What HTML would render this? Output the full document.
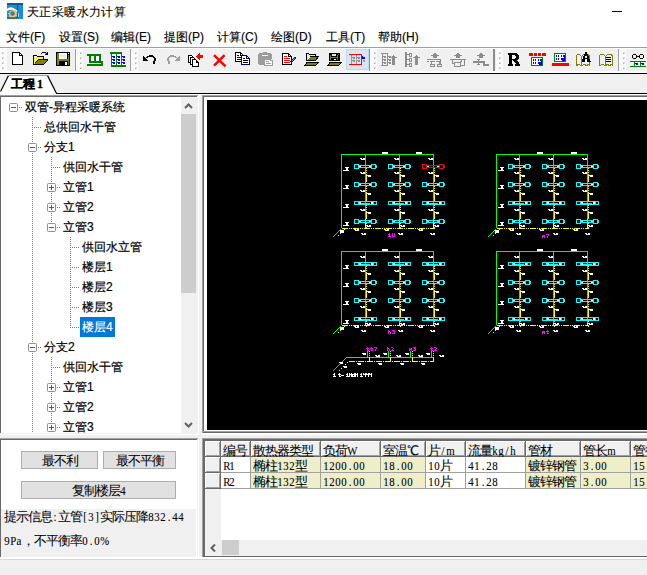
<!DOCTYPE html><html><head><meta charset="utf-8"><style>
*{margin:0;padding:0;box-sizing:border-box}
html,body{width:647px;height:575px;overflow:hidden;background:#f0f0f0;font-family:'Liberation Sans',sans-serif;font-size:12px;color:#000}
.a{position:absolute}
.t{position:absolute;white-space:nowrap;line-height:14px}
.m{font-family:'Liberation Serif',serif;font-size:12px;-webkit-text-stroke:0.1px #000}
.m i{font-style:normal;display:inline-block;width:6px;text-align:center;transform:scaleX(0.9)}
.c{font-size:13px;letter-spacing:-1px}
.ss{-webkit-text-stroke:0.05px #000}
svg{position:absolute;overflow:visible}
</style></head><body><div class="a" style="left:0;top:0;width:647px;height:47px;background:#fff"></div>
<svg class="a" style="left:7px;top:3px" width="16" height="16" viewBox="7 3 16 16">
<rect x="7" y="3" width="16" height="16" fill="#1b8fd6"/>
<rect x="7" y="3" width="16" height="2" fill="#0d5a97"/>
<rect x="17" y="4" width="1" height="14" fill="#0d4f86"/>
<path d="M7 9Q10 6 14 8.5L18 11L16 12L13 10Q10 9 7 11Z" fill="#fff"/>
<path d="M12.3 8.6l1.2 1.8 2-0.6 0.2 2.1 2 0.8-1.2 1.7 1 1.9-2.1 0.3-0.5 2-1.9-0.9-1.7 1.3-0.6-2-2.1-0.2 0.9-1.9-1.6-1.4 1.9-0.9-0.3-2.1 2 0.5z" fill="#f4c94a"/>
<circle cx="12.5" cy="13.5" r="2.2" fill="#4170c4"/>
<rect x="7" y="17" width="10" height="2" fill="#2f5fb8" opacity="0.8"/>
<rect x="18" y="13" width="1" height="4" fill="#e8f2ff" opacity="0.7"/>
</svg>
<div class="t" style="left:27px;top:5px;font-size:12px;letter-spacing:0.4px;-webkit-text-stroke:0.1px #000">天正采暖水力计算</div>
<div class="a" style="left:612px;top:11px;width:10px;height:1px;background:#000"></div>
<div class="t" style="left:6px;top:30px;-webkit-text-stroke:0.15px #000">文件(F)</div>
<div class="t" style="left:59px;top:30px;-webkit-text-stroke:0.15px #000">设置(S)</div>
<div class="t" style="left:111px;top:30px;-webkit-text-stroke:0.15px #000">编辑(E)</div>
<div class="t" style="left:164px;top:30px;-webkit-text-stroke:0.15px #000">提图(P)</div>
<div class="t" style="left:217px;top:30px;-webkit-text-stroke:0.15px #000">计算(C)</div>
<div class="t" style="left:271px;top:30px;-webkit-text-stroke:0.15px #000">绘图(D)</div>
<div class="t" style="left:326px;top:30px;-webkit-text-stroke:0.15px #000">工具(T)</div>
<div class="t" style="left:378px;top:30px;-webkit-text-stroke:0.15px #000">帮助(H)</div>
<div class="a" style="left:0;top:47px;width:647px;height:1px;background:#a0a0a0"></div>
<div class="a" style="left:0;top:48px;width:647px;height:1px;background:#fff"></div>
<div class="a" style="left:0;top:49px;width:647px;height:22px;background:#f0f0f0"></div>
<div class="a" style="left:0;top:71px;width:647px;height:2px;background:#fff"></div>
<div class="a" style="left:0;top:73px;width:647px;height:1px;background:#000"></div>
<div class="a" style="left:0px;top:49px;width:7px;height:22px;background:#fafafa"></div>
<div class="a" style="left:76px;top:49px;width:7px;height:22px;background:#fafafa"></div>
<div class="a" style="left:131px;top:49px;width:7px;height:22px;background:#fafafa"></div>
<div class="a" style="left:370px;top:49px;width:7px;height:22px;background:#fafafa"></div>
<div class="a" style="left:496px;top:49px;width:7px;height:22px;background:#fafafa"></div>
<div class="a" style="left:619px;top:49px;width:7px;height:22px;background:#fafafa"></div>
<div class="a" style="left:2px;top:52px;width:2px;height:2px;background:#dcdcdc"></div>
<div class="a" style="left:2px;top:53px;width:1px;height:1px;background:#a8a8a8"></div>
<div class="a" style="left:2px;top:57px;width:2px;height:2px;background:#dcdcdc"></div>
<div class="a" style="left:2px;top:58px;width:1px;height:1px;background:#a8a8a8"></div>
<div class="a" style="left:2px;top:62px;width:2px;height:2px;background:#dcdcdc"></div>
<div class="a" style="left:2px;top:63px;width:1px;height:1px;background:#a8a8a8"></div>
<div class="a" style="left:2px;top:67px;width:2px;height:2px;background:#dcdcdc"></div>
<div class="a" style="left:2px;top:68px;width:1px;height:1px;background:#a8a8a8"></div>
<div class="a" style="left:80px;top:52px;width:2px;height:2px;background:#dcdcdc"></div>
<div class="a" style="left:80px;top:53px;width:1px;height:1px;background:#a8a8a8"></div>
<div class="a" style="left:80px;top:57px;width:2px;height:2px;background:#dcdcdc"></div>
<div class="a" style="left:80px;top:58px;width:1px;height:1px;background:#a8a8a8"></div>
<div class="a" style="left:80px;top:62px;width:2px;height:2px;background:#dcdcdc"></div>
<div class="a" style="left:80px;top:63px;width:1px;height:1px;background:#a8a8a8"></div>
<div class="a" style="left:80px;top:67px;width:2px;height:2px;background:#dcdcdc"></div>
<div class="a" style="left:80px;top:68px;width:1px;height:1px;background:#a8a8a8"></div>
<div class="a" style="left:135px;top:52px;width:2px;height:2px;background:#dcdcdc"></div>
<div class="a" style="left:135px;top:53px;width:1px;height:1px;background:#a8a8a8"></div>
<div class="a" style="left:135px;top:57px;width:2px;height:2px;background:#dcdcdc"></div>
<div class="a" style="left:135px;top:58px;width:1px;height:1px;background:#a8a8a8"></div>
<div class="a" style="left:135px;top:62px;width:2px;height:2px;background:#dcdcdc"></div>
<div class="a" style="left:135px;top:63px;width:1px;height:1px;background:#a8a8a8"></div>
<div class="a" style="left:135px;top:67px;width:2px;height:2px;background:#dcdcdc"></div>
<div class="a" style="left:135px;top:68px;width:1px;height:1px;background:#a8a8a8"></div>
<div class="a" style="left:374px;top:52px;width:2px;height:2px;background:#dcdcdc"></div>
<div class="a" style="left:374px;top:53px;width:1px;height:1px;background:#a8a8a8"></div>
<div class="a" style="left:374px;top:57px;width:2px;height:2px;background:#dcdcdc"></div>
<div class="a" style="left:374px;top:58px;width:1px;height:1px;background:#a8a8a8"></div>
<div class="a" style="left:374px;top:62px;width:2px;height:2px;background:#dcdcdc"></div>
<div class="a" style="left:374px;top:63px;width:1px;height:1px;background:#a8a8a8"></div>
<div class="a" style="left:374px;top:67px;width:2px;height:2px;background:#dcdcdc"></div>
<div class="a" style="left:374px;top:68px;width:1px;height:1px;background:#a8a8a8"></div>
<div class="a" style="left:499px;top:52px;width:2px;height:2px;background:#dcdcdc"></div>
<div class="a" style="left:499px;top:53px;width:1px;height:1px;background:#a8a8a8"></div>
<div class="a" style="left:499px;top:57px;width:2px;height:2px;background:#dcdcdc"></div>
<div class="a" style="left:499px;top:58px;width:1px;height:1px;background:#a8a8a8"></div>
<div class="a" style="left:499px;top:62px;width:2px;height:2px;background:#dcdcdc"></div>
<div class="a" style="left:499px;top:63px;width:1px;height:1px;background:#a8a8a8"></div>
<div class="a" style="left:499px;top:67px;width:2px;height:2px;background:#dcdcdc"></div>
<div class="a" style="left:499px;top:68px;width:1px;height:1px;background:#a8a8a8"></div>
<div class="a" style="left:623px;top:52px;width:2px;height:2px;background:#dcdcdc"></div>
<div class="a" style="left:623px;top:53px;width:1px;height:1px;background:#a8a8a8"></div>
<div class="a" style="left:623px;top:57px;width:2px;height:2px;background:#dcdcdc"></div>
<div class="a" style="left:623px;top:58px;width:1px;height:1px;background:#a8a8a8"></div>
<div class="a" style="left:623px;top:62px;width:2px;height:2px;background:#dcdcdc"></div>
<div class="a" style="left:623px;top:63px;width:1px;height:1px;background:#a8a8a8"></div>
<div class="a" style="left:623px;top:67px;width:2px;height:2px;background:#dcdcdc"></div>
<div class="a" style="left:623px;top:68px;width:1px;height:1px;background:#a8a8a8"></div>
<div class="a" style="left:75px;top:49px;width:1px;height:22px;background:#a0a0a0"></div>
<div class="a" style="left:130px;top:49px;width:1px;height:22px;background:#a0a0a0"></div>
<div class="a" style="left:369px;top:49px;width:1px;height:22px;background:#909090"></div>
<div class="a" style="left:493px;top:49px;width:2px;height:22px;background:#8c8c8c"></div>
<div class="a" style="left:618px;top:49px;width:1px;height:22px;background:#a0a0a0"></div>
<div class="a" style="left:346px;top:49px;width:23px;height:21px;background:#d9e5f2;border:1px solid #bcdaf5"></div>
<svg class="a" style="left:0;top:46px" width="647" height="26" viewBox="0 46 647 26" shape-rendering="crispEdges"><path d="M12.5 52.5H19.5L22.5 55.5V64.5H12.5Z" fill="#fff" stroke="#000" stroke-width="1" /><rect x="19" y="53" width="1" height="3" fill="#000"/><rect x="19" y="55" width="3" height="1" fill="#000"/><rect x="33" y="55" width="1" height="10" fill="#000"/><rect x="34" y="55" width="3" height="1" fill="#000"/><rect x="37" y="56" width="7" height="1" fill="#000"/><rect x="43" y="56" width="1" height="3" fill="#000"/><rect x="33" y="64" width="11" height="1" fill="#000"/><rect x="34" y="57" width="1" height="1" fill="#ffff00"/><rect x="35" y="57" width="1" height="1" fill="#ffff00"/><rect x="36" y="57" width="1" height="1" fill="#ffff00"/><rect x="37" y="57" width="1" height="1" fill="#ffff00"/><rect x="38" y="57" width="1" height="1" fill="#ffff00"/><rect x="39" y="57" width="1" height="1" fill="#ffff00"/><rect x="40" y="57" width="1" height="1" fill="#ffff00"/><rect x="41" y="57" width="1" height="1" fill="#ffff00"/><rect x="42" y="57" width="1" height="1" fill="#ffff00"/><rect x="34" y="58" width="1" height="1" fill="#ffff00"/><rect x="35" y="58" width="1" height="1" fill="#fff"/><rect x="36" y="58" width="1" height="1" fill="#ffff00"/><rect x="37" y="58" width="1" height="1" fill="#fff"/><rect x="38" y="58" width="1" height="1" fill="#ffff00"/><rect x="39" y="58" width="1" height="1" fill="#fff"/><rect x="40" y="58" width="1" height="1" fill="#ffff00"/><rect x="41" y="58" width="1" height="1" fill="#fff"/><rect x="42" y="58" width="1" height="1" fill="#ffff00"/><rect x="34" y="59" width="1" height="1" fill="#ffff00"/><rect x="35" y="59" width="1" height="1" fill="#ffff00"/><rect x="36" y="59" width="1" height="1" fill="#ffff00"/><rect x="34" y="60" width="1" height="1" fill="#ffff00"/><rect x="35" y="60" width="1" height="1" fill="#fff"/><rect x="34" y="61" width="1" height="1" fill="#ffff00"/><rect x="35" y="61" width="1" height="1" fill="#ffff00"/><rect x="34" y="62" width="1" height="1" fill="#ffff00"/><rect x="34" y="63" width="1" height="1" fill="#ffff00"/><path d="M35 64L38.5 59.5H47.5L43.5 64Z" fill="#808000" stroke="none" stroke-width="1" /><rect x="38" y="59" width="10" height="1" fill="#000"/><rect x="47" y="59" width="1" height="2" fill="#000"/><path d="M34.5 63.5L38.5 59.5" fill="none" stroke="#000" stroke-width="1" /><path d="M43.5 64.5L47.5 60.5" fill="none" stroke="#000" stroke-width="1" /><rect x="42" y="52" width="4" height="1" fill="#000"/><rect x="41" y="53" width="1" height="1" fill="#000"/><rect x="46" y="53" width="1" height="1" fill="#000"/><path d="M44 55H48V51Z" fill="#000" stroke="none" stroke-width="1" /><rect x="56" y="52" width="14" height="14" fill="#000"/><rect x="57" y="53" width="2" height="12" fill="#808000"/><rect x="68" y="55" width="1" height="10" fill="#808000"/><rect x="57" y="59" width="12" height="2" fill="#808000"/><rect x="59" y="53" width="8" height="6" fill="#fff"/><rect x="60" y="54" width="6" height="4" fill="#ececec"/><rect x="65" y="62" width="2" height="3" fill="#fff"/><rect x="68" y="53" width="1" height="1" fill="#fff"/><rect x="87" y="54" width="14" height="2" fill="#008000"/><rect x="89" y="56" width="2" height="7" fill="#008000"/><rect x="91" y="56" width="3" height="5" fill="#fff"/><rect x="94" y="56" width="2" height="6" fill="#008000"/><rect x="96" y="56" width="3" height="5" fill="#fff"/><rect x="99" y="56" width="2" height="6" fill="#008000"/><rect x="89" y="61" width="14" height="2" fill="#008000"/><rect x="101" y="61" width="2" height="5" fill="#008000"/><rect x="87" y="63" width="14" height="1" fill="#fff"/><rect x="87" y="64" width="16" height="2" fill="#008000"/><rect x="110" y="52" width="12" height="2" fill="#008000"/><rect x="111" y="54" width="1" height="13" fill="#008000"/><rect x="116" y="54" width="1" height="11" fill="#008000"/><rect x="121" y="54" width="1" height="11" fill="#008000"/><rect x="111" y="65" width="15" height="2" fill="#008000"/><rect x="112" y="54" width="4" height="11" fill="#fff"/><rect x="117" y="54" width="4" height="11" fill="#fff"/><rect x="122" y="55" width="4" height="10" fill="#fbfbf0"/><rect x="112" y="56" width="3" height="1" fill="#0000ff"/><rect x="113" y="57" width="2" height="1" fill="#0000ff"/><rect x="112" y="59" width="3" height="1" fill="#0000ff"/><rect x="113" y="60" width="2" height="1" fill="#0000ff"/><rect x="112" y="62" width="3" height="1" fill="#0000ff"/><rect x="113" y="63" width="2" height="1" fill="#0000ff"/><rect x="117" y="56" width="3" height="1" fill="#0000ff"/><rect x="118" y="57" width="2" height="1" fill="#0000ff"/><rect x="117" y="59" width="3" height="1" fill="#0000ff"/><rect x="118" y="60" width="2" height="1" fill="#0000ff"/><rect x="117" y="62" width="3" height="1" fill="#0000ff"/><rect x="118" y="63" width="2" height="1" fill="#0000ff"/><rect x="122" y="56" width="3" height="1" fill="#0000ff"/><rect x="123" y="57" width="2" height="1" fill="#0000ff"/><rect x="122" y="59" width="3" height="1" fill="#0000ff"/><rect x="123" y="60" width="2" height="1" fill="#0000ff"/><rect x="122" y="62" width="3" height="1" fill="#0000ff"/><rect x="123" y="63" width="2" height="1" fill="#0000ff"/><rect x="143" y="56" width="1" height="5" fill="#000"/><rect x="144" y="57" width="1" height="4" fill="#000"/><rect x="145" y="58" width="1" height="3" fill="#000"/><rect x="146" y="59" width="1" height="2" fill="#000"/><rect x="147" y="60" width="1" height="1" fill="#000"/><rect x="146" y="57" width="2" height="1" fill="#000"/><rect x="147" y="56" width="2" height="1" fill="#000"/><rect x="149" y="55" width="4" height="1" fill="#000"/><rect x="148" y="56" width="6" height="1" fill="#000"/><rect x="153" y="57" width="2" height="1" fill="#000"/><rect x="154" y="58" width="2" height="3" fill="#000"/><rect x="153" y="61" width="2" height="1" fill="#000"/><rect x="153" y="62" width="2" height="2" fill="#000"/><rect x="179" y="56" width="1" height="5" fill="#9c9c9c"/><rect x="178" y="57" width="1" height="4" fill="#9c9c9c"/><rect x="177" y="58" width="1" height="3" fill="#9c9c9c"/><rect x="176" y="59" width="1" height="2" fill="#9c9c9c"/><rect x="175" y="60" width="1" height="1" fill="#9c9c9c"/><rect x="175" y="57" width="2" height="1" fill="#9c9c9c"/><rect x="174" y="56" width="2" height="1" fill="#9c9c9c"/><rect x="170" y="55" width="4" height="1" fill="#9c9c9c"/><rect x="169" y="56" width="6" height="1" fill="#9c9c9c"/><rect x="168" y="57" width="2" height="1" fill="#9c9c9c"/><rect x="167" y="58" width="2" height="3" fill="#9c9c9c"/><rect x="168" y="61" width="2" height="1" fill="#9c9c9c"/><rect x="168" y="62" width="2" height="2" fill="#9c9c9c"/><path d="M188.5 55.5H191.5L194.5 58.5V62.5H188.5Z" fill="#fff" stroke="#000" stroke-width="1" /><path d="M192 56.5V59H194.5Z" fill="#000" stroke="none" stroke-width="1" /><path d="M190.5 57.5H193.5L196.5 60.5V64.5H190.5Z" fill="#fff" stroke="#000" stroke-width="1" /><path d="M194 58.5V61H196.5Z" fill="#000" stroke="none" stroke-width="1" /><path d="M192.5 59.5H195.5L198.5 62.5V66.5H192.5Z" fill="#fff" stroke="#000" stroke-width="1" /><path d="M196 60.5V63H198.5Z" fill="#000" stroke="none" stroke-width="1" /><path d="M196 56.5L199.5 52.5V55H203V58H199.5V60.5Z" fill="#ff0000" stroke="none" stroke-width="1" /><path d="M214 55.2L225.6 66.4M224.6 55.2L214 65.6" fill="none" stroke="#ff0000" stroke-width="2.5" shape-rendering="auto"/><path d="M235.5 52.5H240.5L243.5 55.5V61.5H235.5Z" fill="#fff" stroke="#000" stroke-width="1" /><rect x="240" y="53" width="1" height="3" fill="#000"/><rect x="240" y="55" width="3" height="1" fill="#000"/><rect x="237" y="55" width="2" height="1" fill="#000"/><rect x="237" y="57" width="4" height="1" fill="#000"/><rect x="237" y="59" width="4" height="1" fill="#000"/><path d="M241.5 55.5H246.5L249.5 58.5V64.5H241.5Z" fill="#fff" stroke="#000080" stroke-width="1" /><rect x="246" y="56" width="1" height="3" fill="#000080"/><rect x="246" y="58" width="3" height="1" fill="#000080"/><rect x="243" y="58" width="2" height="1" fill="#000"/><rect x="243" y="60" width="5" height="1" fill="#000"/><rect x="243" y="62" width="5" height="1" fill="#000"/><rect x="259" y="53" width="12" height="12" fill="#9c9c9c"/><rect x="258" y="54" width="14" height="10" fill="#9c9c9c"/><rect x="263" y="52" width="4" height="1" fill="#9c9c9c"/><rect x="262" y="55" width="6" height="1" fill="#f4f4f4"/><rect x="264" y="59" width="9" height="7" fill="#9c9c9c"/><rect x="265" y="60" width="6" height="5" fill="#fafafa"/><rect x="271" y="61" width="1" height="4" fill="#fafafa"/><rect x="270" y="60" width="1" height="1" fill="#9c9c9c"/><rect x="271" y="59" width="2" height="1" fill="#f0f0f0"/><rect x="266" y="61" width="3" height="1" fill="#9c9c9c"/><rect x="266" y="63" width="5" height="1" fill="#9c9c9c"/><path d="M282.5 53.5H288.5L291.5 56.5V64.5H282.5Z" fill="#fff" stroke="#000" stroke-width="1" /><rect x="288" y="54" width="1" height="3" fill="#000"/><rect x="288" y="56" width="3" height="1" fill="#000"/><rect x="284" y="56" width="3" height="1" fill="#ff0000"/><rect x="284" y="58" width="6" height="1" fill="#ff0000"/><rect x="284" y="60" width="6" height="1" fill="#ff0000"/><rect x="284" y="62" width="6" height="1" fill="#ff0000"/><path d="M290.8 62.2L295.5 57.5" fill="none" stroke="#0000ff" stroke-width="2.6" /><path d="M292 61L295 58" fill="none" stroke="#b8c8ff" stroke-width="0.7" /><rect x="306" y="53" width="3" height="1" fill="#000"/><rect x="306" y="54" width="1" height="7" fill="#000"/><rect x="309" y="54" width="6" height="1" fill="#000"/><rect x="315" y="54" width="1" height="2" fill="#000"/><rect x="306" y="60" width="10" height="1" fill="#000"/><path d="M307 54.5H308.5L311 56.5L307 59.5Z" fill="#ffff00" stroke="none" stroke-width="1" /><rect x="310" y="55" width="4" height="1" fill="#ffff00"/><rect x="308" y="56" width="1" height="1" fill="#fff"/><path d="M308 59.5L310.5 56.5H318.5L315.5 59.5Z" fill="#808000" stroke="none" stroke-width="1" /><rect x="310" y="56" width="9" height="1" fill="#000"/><path d="M315.5 60.5L318.5 56.5" fill="none" stroke="#000" stroke-width="1" /><path d="M304.5 65.5L307.5 62H318.5L315.5 65.5Z" fill="#808000" stroke="#000" stroke-width="1" /><rect x="329" y="53" width="11" height="8" fill="#000"/><rect x="330" y="55" width="1" height="5" fill="#808000"/><rect x="337" y="55" width="1" height="5" fill="#808000"/><rect x="330" y="57" width="8" height="1" fill="#808000"/><rect x="332" y="54" width="4" height="2" fill="#e8e8e8"/><rect x="334" y="59" width="2" height="1" fill="#fff"/><rect x="338" y="54" width="1" height="1" fill="#808000"/><path d="M327.5 65.5L330.5 62H341.5L338.5 65.5Z" fill="#808000" stroke="#000" stroke-width="1" /><rect x="349" y="54" width="13" height="1" fill="#ff0000"/><rect x="349" y="64" width="13" height="1" fill="#ff0000"/><rect x="361" y="54" width="1" height="11" fill="#ff0000"/><rect x="351" y="55" width="1" height="9" fill="#9a9a9a"/><rect x="356" y="55" width="1" height="9" fill="#9a9a9a"/><rect x="352" y="57" width="3" height="1" fill="#8c8c8c"/><rect x="353" y="58" width="2" height="1" fill="#8c8c8c"/><rect x="352" y="60" width="3" height="1" fill="#8c8c8c"/><rect x="353" y="61" width="2" height="1" fill="#8c8c8c"/><rect x="357" y="57" width="3" height="1" fill="#8c8c8c"/><rect x="358" y="58" width="2" height="1" fill="#8c8c8c"/><rect x="357" y="60" width="3" height="1" fill="#8c8c8c"/><rect x="358" y="61" width="2" height="1" fill="#8c8c8c"/><rect x="362" y="57" width="3" height="2" fill="#0000ff"/><rect x="362" y="56" width="1" height="1" fill="#0000ff"/><rect x="363" y="60" width="2" height="2" fill="#9a9a9a"/><rect x="381" y="53" width="7" height="1" fill="#8c8c8c"/><rect x="381" y="65" width="7" height="1" fill="#8c8c8c"/><rect x="382" y="53" width="1" height="13" fill="#8c8c8c"/><rect x="387" y="53" width="1" height="13" fill="#8c8c8c"/><rect x="383" y="56" width="3" height="1" fill="#8c8c8c"/><rect x="384" y="57" width="2" height="1" fill="#8c8c8c"/><rect x="388" y="56" width="3" height="1" fill="#8c8c8c"/><rect x="389" y="57" width="2" height="1" fill="#8c8c8c"/><rect x="383" y="59" width="3" height="1" fill="#8c8c8c"/><rect x="384" y="60" width="2" height="1" fill="#8c8c8c"/><rect x="388" y="59" width="3" height="1" fill="#8c8c8c"/><rect x="389" y="60" width="2" height="1" fill="#8c8c8c"/><rect x="383" y="62" width="3" height="1" fill="#8c8c8c"/><rect x="384" y="63" width="2" height="1" fill="#8c8c8c"/><rect x="388" y="62" width="3" height="1" fill="#8c8c8c"/><rect x="389" y="63" width="2" height="1" fill="#8c8c8c"/><rect x="392" y="57" width="3" height="8" fill="#8c8c8c"/><rect x="390" y="57" width="7" height="1" fill="#8c8c8c"/><rect x="392" y="56" width="3" height="1" fill="#8c8c8c"/><rect x="393" y="55" width="1" height="1" fill="#8c8c8c"/><rect x="405" y="52" width="2" height="15" fill="#8c8c8c"/><rect x="407" y="54" width="2" height="1" fill="#8c8c8c"/><path d="M409.5 53.5 h2 v3 h-2z" fill="none" stroke="#8c8c8c" stroke-width="1" /><rect x="407" y="59" width="2" height="1" fill="#8c8c8c"/><path d="M409.5 58.5 h2 v3 h-2z" fill="none" stroke="#8c8c8c" stroke-width="1" /><rect x="407" y="64" width="2" height="1" fill="#8c8c8c"/><path d="M409.5 63.5 h2 v3 h-2z" fill="none" stroke="#8c8c8c" stroke-width="1" /><rect x="415" y="57" width="3" height="8" fill="#8c8c8c"/><rect x="413" y="57" width="7" height="1" fill="#8c8c8c"/><rect x="415" y="56" width="3" height="1" fill="#8c8c8c"/><rect x="416" y="55" width="1" height="1" fill="#8c8c8c"/><rect x="434" y="53" width="2" height="1" fill="#8c8c8c"/><rect x="433" y="54" width="4" height="1" fill="#8c8c8c"/><rect x="431" y="55" width="8" height="1" fill="#8c8c8c"/><rect x="433" y="56" width="4" height="2" fill="#8c8c8c"/><rect x="457" y="53" width="2" height="1" fill="#8c8c8c"/><rect x="456" y="54" width="4" height="1" fill="#8c8c8c"/><rect x="454" y="55" width="8" height="1" fill="#8c8c8c"/><rect x="456" y="56" width="4" height="2" fill="#8c8c8c"/><rect x="480" y="53" width="2" height="1" fill="#8c8c8c"/><rect x="479" y="54" width="4" height="1" fill="#8c8c8c"/><rect x="477" y="55" width="8" height="1" fill="#8c8c8c"/><rect x="479" y="56" width="4" height="2" fill="#8c8c8c"/><rect x="427" y="59" width="14" height="1" fill="#8c8c8c"/><rect x="427" y="61" width="2" height="1" fill="#8c8c8c"/><rect x="430" y="61" width="5" height="1" fill="#8c8c8c"/><rect x="436" y="61" width="4" height="1" fill="#8c8c8c"/><rect x="431" y="61" width="1" height="3" fill="#8c8c8c"/><rect x="440" y="59" width="1" height="5" fill="#8c8c8c"/><rect x="439" y="61" width="1" height="3" fill="#8c8c8c"/><path d="M430.5 64.5h4v2h-4z" fill="none" stroke="#8c8c8c" stroke-width="1" /><path d="M437.5 64.5h4v2h-4z" fill="none" stroke="#8c8c8c" stroke-width="1" /><rect x="450" y="59" width="16" height="1" fill="#8c8c8c"/><rect x="452" y="59" width="1" height="5" fill="#8c8c8c"/><rect x="464" y="59" width="1" height="7" fill="#8c8c8c"/><rect x="452" y="63" width="2" height="1" fill="#8c8c8c"/><path d="M454.5 62.5h6v4h-6z" fill="none" stroke="#8c8c8c" stroke-width="1" /><rect x="460" y="61" width="2" height="1" fill="#8c8c8c"/><rect x="461" y="60" width="1" height="1" fill="#8c8c8c"/><rect x="460" y="65" width="4" height="1" fill="#8c8c8c"/><rect x="477" y="59" width="3" height="1" fill="#8c8c8c"/><rect x="478" y="59" width="1" height="6" fill="#8c8c8c"/><rect x="477" y="64" width="3" height="1" fill="#8c8c8c"/><rect x="473" y="61" width="12" height="2" fill="#8c8c8c"/><rect x="483" y="62" width="2" height="4" fill="#8c8c8c"/><rect x="483" y="64" width="6" height="2" fill="#8c8c8c"/><rect x="508" y="53" width="9" height="1" fill="#000"/><rect x="508" y="54" width="10" height="1" fill="#000"/><rect x="509" y="55" width="3" height="1" fill="#000"/><rect x="515" y="55" width="4" height="1" fill="#000"/><rect x="509" y="56" width="3" height="1" fill="#000"/><rect x="516" y="56" width="3" height="1" fill="#000"/><rect x="509" y="57" width="3" height="1" fill="#000"/><rect x="516" y="57" width="3" height="1" fill="#000"/><rect x="509" y="58" width="3" height="1" fill="#000"/><rect x="515" y="58" width="4" height="1" fill="#000"/><rect x="509" y="59" width="9" height="1" fill="#000"/><rect x="509" y="60" width="3" height="1" fill="#000"/><rect x="513" y="60" width="4" height="1" fill="#000"/><rect x="509" y="61" width="3" height="1" fill="#000"/><rect x="514" y="61" width="4" height="1" fill="#000"/><rect x="509" y="62" width="3" height="1" fill="#000"/><rect x="515" y="62" width="4" height="1" fill="#000"/><rect x="509" y="63" width="3" height="1" fill="#000"/><rect x="516" y="63" width="3" height="1" fill="#000"/><rect x="508" y="64" width="5" height="1" fill="#000"/><rect x="515" y="64" width="5" height="1" fill="#000"/><rect x="508" y="65" width="5" height="1" fill="#000"/><rect x="515" y="65" width="5" height="1" fill="#000"/><rect x="529" y="53" width="4" height="3" fill="#ff0000"/><rect x="534" y="53" width="3" height="3" fill="#ff0000"/><rect x="538" y="53" width="3" height="3" fill="#ff0000"/><rect x="542" y="53" width="4" height="3" fill="#ff0000"/><path d="M531.5 57.5h11v8h-11z" fill="#fff" stroke="#008000" stroke-width="1.3" /><rect x="533" y="59" width="1" height="2" fill="#0000ff"/><rect x="533" y="62" width="1" height="2" fill="#0000ff"/><rect x="535" y="59" width="1" height="2" fill="#0000ff"/><rect x="535" y="62" width="1" height="2" fill="#0000ff"/><rect x="538" y="59" width="1" height="2" fill="#0000ff"/><rect x="538" y="62" width="1" height="2" fill="#0000ff"/><rect x="540" y="59" width="1" height="2" fill="#0000ff"/><rect x="540" y="62" width="1" height="2" fill="#0000ff"/><rect x="539" y="62" width="3" height="3" fill="#0000ff"/><rect x="541" y="59" width="1" height="3" fill="#0000ff"/><path d="M554.5 53.5h11v8h-11z" fill="#fff" stroke="#008000" stroke-width="1.3" /><rect x="556" y="55" width="1" height="2" fill="#0000ff"/><rect x="556" y="58" width="1" height="2" fill="#0000ff"/><rect x="558" y="55" width="1" height="2" fill="#0000ff"/><rect x="558" y="58" width="1" height="2" fill="#0000ff"/><rect x="561" y="55" width="1" height="2" fill="#0000ff"/><rect x="561" y="58" width="1" height="2" fill="#0000ff"/><rect x="563" y="55" width="1" height="2" fill="#0000ff"/><rect x="563" y="58" width="1" height="2" fill="#0000ff"/><rect x="562" y="58" width="3" height="3" fill="#0000ff"/><rect x="564" y="55" width="1" height="3" fill="#0000ff"/><rect x="552" y="63" width="17" height="3" fill="#ff0000"/><path d="M576.5 65.5V55.5L577.5 54.5H579.5L581.5 56.5L583.5 54.5H587.5L589.5 55.5V65.5L588.5 64.5L586.5 65.5L584.5 64.5L581.5 65.5L578.5 64.5Z" fill="none" stroke="#808000" stroke-width="1" /><path d="M581.5 56.5V64.5" fill="none" stroke="#808000" stroke-width="1" /><rect x="585" y="52" width="2" height="2" fill="#000"/><rect x="584" y="54" width="4" height="2" fill="#000"/><rect x="583" y="56" width="2" height="2" fill="#000"/><rect x="587" y="56" width="2" height="2" fill="#000"/><rect x="583" y="58" width="6" height="1" fill="#000"/><rect x="582" y="59" width="3" height="2" fill="#000"/><rect x="587" y="59" width="3" height="2" fill="#000"/><rect x="582" y="61" width="3" height="1" fill="#000"/><rect x="587" y="61" width="4" height="1" fill="#000"/><path d="M599.5 65.5V55.5L600.5 54.5H603.5L605.5 56.5L607.5 54.5H610.5L612.5 55.5V65.5L611.5 64.5L609.5 65.5L607.5 64.5L605.5 65.5L602.5 64.5Z" fill="none" stroke="#808000" stroke-width="1" /><path d="M605.5 56.5V64.5" fill="none" stroke="#808000" stroke-width="1" /><rect x="606" y="57" width="5" height="1" fill="#000"/><rect x="606" y="59" width="5" height="1" fill="#000"/><rect x="606" y="61" width="5" height="1" fill="#000"/><path d="M633.5 54.5h2l1 1v2l-1 1h-2l-1-1v-2z" fill="none" stroke="#000" stroke-width="1.2" /><path d="M640.5 54.5h2l1 1v2l-1 1h-2l-1-1v-2z" fill="none" stroke="#000" stroke-width="1.2" /><rect x="637" y="56" width="2" height="1" fill="#000"/><rect x="630" y="61" width="16" height="1" fill="#008000"/><rect x="630" y="66" width="16" height="1" fill="#008000"/><rect x="634" y="61" width="1" height="6" fill="#008000"/><rect x="640" y="61" width="1" height="6" fill="#008000"/><rect x="635" y="63" width="3" height="1" fill="#0000ff"/><rect x="636" y="64" width="2" height="1" fill="#0000ff"/><rect x="641" y="63" width="3" height="1" fill="#0000ff"/><rect x="642" y="64" width="2" height="1" fill="#0000ff"/></svg>
<div class="a" style="left:0;top:93px;width:647px;height:1px;background:#000"></div>
<div class="a" style="left:0;top:94px;width:647px;height:1px;background:#fff"></div>
<svg style="left:0;top:74px" width="70" height="21" viewBox="0 74 70 21">
<path d="M0,93 L0,91 L8,75 L47,75 L56,93 Z" fill="#fff"/>
<path d="M0.5,91.5 L8.5,75.5" stroke="#000" stroke-width="1.2" fill="none"/>
<path d="M8,75.5 L47,75.5" stroke="#a0a0a0" stroke-width="1" fill="none"/>
<path d="M47.5,75.5 L56.5,93.5" stroke="#000" stroke-width="1.2" fill="none"/>
<rect x="0" y="93" width="56" height="1" fill="#fff"/>
</svg>
<div class="t" style="left:11px;top:77px;font-weight:bold;font-size:12px;-webkit-text-stroke:0.3px #000">工程<span style="font-family:Liberation Serif;font-size:12px;margin-left:2px">1</span></div>
<div class="a" style="left:0px;top:95px;width:199px;height:340px;background:#fff"></div>
<div class="a" style="left:0px;top:95px;width:198px;height:1px;background:#a0a0a0"></div>
<div class="a" style="left:0px;top:96px;width:197px;height:1px;background:#696969"></div>
<div class="a" style="left:0px;top:96px;width:1px;height:338px;background:#696969"></div>
<div class="a" style="left:197px;top:96px;width:1px;height:338px;background:#f0f0f0"></div>
<div class="a" style="left:0px;top:433px;width:198px;height:1px;background:#f0f0f0"></div>
<div class="a" style="left:1px;top:97px;width:180px;height:336px;overflow:hidden"><div class="a" style="left:-1px;top:-97px;width:198px;height:434px"><svg class="a" style="left:0;top:0" width="198" height="434" viewBox="0 0 198 434" shape-rendering="crispEdges"><path fill="#7a7a7a" d="M32 117h1v1h-1zM32 119h1v1h-1zM32 121h1v1h-1zM32 123h1v1h-1zM32 125h1v1h-1zM32 127h1v1h-1zM32 129h1v1h-1zM32 131h1v1h-1zM32 133h1v1h-1zM32 135h1v1h-1zM32 137h1v1h-1zM32 139h1v1h-1zM32 141h1v1h-1zM32 153h1v1h-1zM32 155h1v1h-1zM32 157h1v1h-1zM32 159h1v1h-1zM32 161h1v1h-1zM32 163h1v1h-1zM32 165h1v1h-1zM32 167h1v1h-1zM32 169h1v1h-1zM32 171h1v1h-1zM32 173h1v1h-1zM32 175h1v1h-1zM32 177h1v1h-1zM32 179h1v1h-1zM32 181h1v1h-1zM32 183h1v1h-1zM32 185h1v1h-1zM32 187h1v1h-1zM32 189h1v1h-1zM32 191h1v1h-1zM32 193h1v1h-1zM32 195h1v1h-1zM32 197h1v1h-1zM32 199h1v1h-1zM32 201h1v1h-1zM32 203h1v1h-1zM32 205h1v1h-1zM32 207h1v1h-1zM32 209h1v1h-1zM32 211h1v1h-1zM32 213h1v1h-1zM32 215h1v1h-1zM32 217h1v1h-1zM32 219h1v1h-1zM32 221h1v1h-1zM32 223h1v1h-1zM32 225h1v1h-1zM32 227h1v1h-1zM32 229h1v1h-1zM32 231h1v1h-1zM32 233h1v1h-1zM32 235h1v1h-1zM32 237h1v1h-1zM32 239h1v1h-1zM32 241h1v1h-1zM32 243h1v1h-1zM32 245h1v1h-1zM32 247h1v1h-1zM32 249h1v1h-1zM32 251h1v1h-1zM32 253h1v1h-1zM32 255h1v1h-1zM32 257h1v1h-1zM32 259h1v1h-1zM32 261h1v1h-1zM32 263h1v1h-1zM32 265h1v1h-1zM32 267h1v1h-1zM32 269h1v1h-1zM32 271h1v1h-1zM32 273h1v1h-1zM32 275h1v1h-1zM32 277h1v1h-1zM32 279h1v1h-1zM32 281h1v1h-1zM32 283h1v1h-1zM32 285h1v1h-1zM32 287h1v1h-1zM32 289h1v1h-1zM32 291h1v1h-1zM32 293h1v1h-1zM32 295h1v1h-1zM32 297h1v1h-1zM32 299h1v1h-1zM32 301h1v1h-1zM32 303h1v1h-1zM32 305h1v1h-1zM32 307h1v1h-1zM32 309h1v1h-1zM32 311h1v1h-1zM32 313h1v1h-1zM32 315h1v1h-1zM32 317h1v1h-1zM32 319h1v1h-1zM32 321h1v1h-1zM32 323h1v1h-1zM32 325h1v1h-1zM32 327h1v1h-1zM32 329h1v1h-1zM32 331h1v1h-1zM32 333h1v1h-1zM32 335h1v1h-1zM32 337h1v1h-1zM32 339h1v1h-1zM32 341h1v1h-1zM32 353h1v1h-1zM32 355h1v1h-1zM32 357h1v1h-1zM32 359h1v1h-1zM32 361h1v1h-1zM32 363h1v1h-1zM32 365h1v1h-1zM32 367h1v1h-1zM32 369h1v1h-1zM32 371h1v1h-1zM32 373h1v1h-1zM32 375h1v1h-1zM32 377h1v1h-1zM32 379h1v1h-1zM32 381h1v1h-1zM32 383h1v1h-1zM32 385h1v1h-1zM32 387h1v1h-1zM32 389h1v1h-1zM32 391h1v1h-1zM32 393h1v1h-1zM32 395h1v1h-1zM32 397h1v1h-1zM32 399h1v1h-1zM32 401h1v1h-1zM32 403h1v1h-1zM32 405h1v1h-1zM32 407h1v1h-1zM32 409h1v1h-1zM32 411h1v1h-1zM32 413h1v1h-1zM32 415h1v1h-1zM32 417h1v1h-1zM32 419h1v1h-1zM32 421h1v1h-1zM32 423h1v1h-1zM32 425h1v1h-1zM32 427h1v1h-1zM32 429h1v1h-1zM32 431h1v1h-1zM51 157h1v1h-1zM51 159h1v1h-1zM51 161h1v1h-1zM51 163h1v1h-1zM51 165h1v1h-1zM51 167h1v1h-1zM51 169h1v1h-1zM51 171h1v1h-1zM51 173h1v1h-1zM51 175h1v1h-1zM51 177h1v1h-1zM51 179h1v1h-1zM51 181h1v1h-1zM51 193h1v1h-1zM51 195h1v1h-1zM51 197h1v1h-1zM51 199h1v1h-1zM51 201h1v1h-1zM51 213h1v1h-1zM51 215h1v1h-1zM51 217h1v1h-1zM51 219h1v1h-1zM51 221h1v1h-1zM70 237h1v1h-1zM70 239h1v1h-1zM70 241h1v1h-1zM70 243h1v1h-1zM70 245h1v1h-1zM70 247h1v1h-1zM70 249h1v1h-1zM70 251h1v1h-1zM70 253h1v1h-1zM70 255h1v1h-1zM70 257h1v1h-1zM70 259h1v1h-1zM70 261h1v1h-1zM70 263h1v1h-1zM70 265h1v1h-1zM70 267h1v1h-1zM70 269h1v1h-1zM70 271h1v1h-1zM70 273h1v1h-1zM70 275h1v1h-1zM70 277h1v1h-1zM70 279h1v1h-1zM70 281h1v1h-1zM70 283h1v1h-1zM70 285h1v1h-1zM70 287h1v1h-1zM70 289h1v1h-1zM70 291h1v1h-1zM70 293h1v1h-1zM70 295h1v1h-1zM70 297h1v1h-1zM70 299h1v1h-1zM70 301h1v1h-1zM70 303h1v1h-1zM70 305h1v1h-1zM70 307h1v1h-1zM70 309h1v1h-1zM70 311h1v1h-1zM70 313h1v1h-1zM70 315h1v1h-1zM70 317h1v1h-1zM70 319h1v1h-1zM70 321h1v1h-1zM70 323h1v1h-1zM70 325h1v1h-1zM70 327h1v1h-1zM51 357h1v1h-1zM51 359h1v1h-1zM51 361h1v1h-1zM51 363h1v1h-1zM51 365h1v1h-1zM51 367h1v1h-1zM51 369h1v1h-1zM51 371h1v1h-1zM51 373h1v1h-1zM51 375h1v1h-1zM51 377h1v1h-1zM51 379h1v1h-1zM51 381h1v1h-1zM51 393h1v1h-1zM51 395h1v1h-1zM51 397h1v1h-1zM51 399h1v1h-1zM51 401h1v1h-1zM51 413h1v1h-1zM51 415h1v1h-1zM51 417h1v1h-1zM51 419h1v1h-1zM51 421h1v1h-1zM19 107h1v1h-1zM21 107h1v1h-1zM34 127h1v1h-1zM36 127h1v1h-1zM38 127h1v1h-1zM40 127h1v1h-1zM38 147h1v1h-1zM40 147h1v1h-1zM53 167h1v1h-1zM55 167h1v1h-1zM57 167h1v1h-1zM59 167h1v1h-1zM57 187h1v1h-1zM59 187h1v1h-1zM57 207h1v1h-1zM59 207h1v1h-1zM57 227h1v1h-1zM59 227h1v1h-1zM72 247h1v1h-1zM74 247h1v1h-1zM76 247h1v1h-1zM78 247h1v1h-1zM72 267h1v1h-1zM74 267h1v1h-1zM76 267h1v1h-1zM78 267h1v1h-1zM72 287h1v1h-1zM74 287h1v1h-1zM76 287h1v1h-1zM78 287h1v1h-1zM72 307h1v1h-1zM74 307h1v1h-1zM76 307h1v1h-1zM78 307h1v1h-1zM72 327h1v1h-1zM74 327h1v1h-1zM76 327h1v1h-1zM78 327h1v1h-1zM38 347h1v1h-1zM40 347h1v1h-1zM53 367h1v1h-1zM55 367h1v1h-1zM57 367h1v1h-1zM59 367h1v1h-1zM57 387h1v1h-1zM59 387h1v1h-1zM57 407h1v1h-1zM59 407h1v1h-1zM57 427h1v1h-1zM59 427h1v1h-1z"/><rect x="9.5" y="103.5" width="8" height="8" rx="1" fill="#fff" stroke="#8f8f8f" stroke-width="1" shape-rendering="auto"/><rect x="11" y="107" width="5" height="1" fill="#3c5a9a"/><rect x="28.5" y="143.5" width="8" height="8" rx="1" fill="#fff" stroke="#8f8f8f" stroke-width="1" shape-rendering="auto"/><rect x="30" y="147" width="5" height="1" fill="#3c5a9a"/><rect x="47.5" y="183.5" width="8" height="8" rx="1" fill="#fff" stroke="#8f8f8f" stroke-width="1" shape-rendering="auto"/><rect x="49" y="187" width="5" height="1" fill="#3c5a9a"/><rect x="51" y="185" width="1" height="5" fill="#3c5a9a"/><rect x="47.5" y="203.5" width="8" height="8" rx="1" fill="#fff" stroke="#8f8f8f" stroke-width="1" shape-rendering="auto"/><rect x="49" y="207" width="5" height="1" fill="#3c5a9a"/><rect x="51" y="205" width="1" height="5" fill="#3c5a9a"/><rect x="47.5" y="223.5" width="8" height="8" rx="1" fill="#fff" stroke="#8f8f8f" stroke-width="1" shape-rendering="auto"/><rect x="49" y="227" width="5" height="1" fill="#3c5a9a"/><rect x="28.5" y="343.5" width="8" height="8" rx="1" fill="#fff" stroke="#8f8f8f" stroke-width="1" shape-rendering="auto"/><rect x="30" y="347" width="5" height="1" fill="#3c5a9a"/><rect x="47.5" y="383.5" width="8" height="8" rx="1" fill="#fff" stroke="#8f8f8f" stroke-width="1" shape-rendering="auto"/><rect x="49" y="387" width="5" height="1" fill="#3c5a9a"/><rect x="51" y="385" width="1" height="5" fill="#3c5a9a"/><rect x="47.5" y="403.5" width="8" height="8" rx="1" fill="#fff" stroke="#8f8f8f" stroke-width="1" shape-rendering="auto"/><rect x="49" y="407" width="5" height="1" fill="#3c5a9a"/><rect x="51" y="405" width="1" height="5" fill="#3c5a9a"/><rect x="47.5" y="423.5" width="8" height="8" rx="1" fill="#fff" stroke="#8f8f8f" stroke-width="1" shape-rendering="auto"/><rect x="49" y="427" width="5" height="1" fill="#3c5a9a"/><rect x="51" y="425" width="1" height="5" fill="#3c5a9a"/></svg>
<div class="t" style="left:25px;top:100px;-webkit-text-stroke:0.2px #000">双管-异程采暖系统</div>
<div class="t" style="left:44px;top:120px;-webkit-text-stroke:0.2px #000">总供回水干管</div>
<div class="t" style="left:44px;top:140px;-webkit-text-stroke:0.2px #000">分支1</div>
<div class="t" style="left:63px;top:160px;-webkit-text-stroke:0.2px #000">供回水干管</div>
<div class="t" style="left:63px;top:180px;-webkit-text-stroke:0.2px #000">立管1</div>
<div class="t" style="left:63px;top:200px;-webkit-text-stroke:0.2px #000">立管2</div>
<div class="t" style="left:63px;top:220px;-webkit-text-stroke:0.2px #000">立管3</div>
<div class="t" style="left:82px;top:240px;-webkit-text-stroke:0.2px #000">供回水立管</div>
<div class="t" style="left:82px;top:260px;-webkit-text-stroke:0.2px #000">楼层1</div>
<div class="t" style="left:82px;top:280px;-webkit-text-stroke:0.2px #000">楼层2</div>
<div class="t" style="left:82px;top:300px;-webkit-text-stroke:0.2px #000">楼层3</div>
<div class="a" style="left:80px;top:317px;width:35px;height:20px;background:#0078d7"></div>
<div class="t" style="left:82px;top:320px;color:#fff;-webkit-text-stroke:0.15px #fff">楼层4</div>
<div class="t" style="left:44px;top:340px;-webkit-text-stroke:0.2px #000">分支2</div>
<div class="t" style="left:63px;top:360px;-webkit-text-stroke:0.2px #000">供回水干管</div>
<div class="t" style="left:63px;top:380px;-webkit-text-stroke:0.2px #000">立管1</div>
<div class="t" style="left:63px;top:400px;-webkit-text-stroke:0.2px #000">立管2</div>
<div class="t" style="left:63px;top:420px;-webkit-text-stroke:0.2px #000">立管3</div></div></div>
<div class="a" style="left:181px;top:97px;width:16px;height:336px;background:#f0f0f0"></div>
<div class="a" style="left:181px;top:114px;width:15px;height:179px;background:#cdcdcd"></div>
<svg class="a" style="left:181px;top:97px" width="16" height="336" viewBox="181 97 16 336"><path d="M185 108L188.5 104.5L192 108M185 423L188.5 426.5L192 423" fill="none" stroke="#606060" stroke-width="2"/></svg>
<div class="a" style="left:202px;top:95px;width:445px;height:340px;background:#fff"></div>
<div class="a" style="left:202px;top:95px;width:445px;height:1px;background:#a0a0a0"></div>
<div class="a" style="left:203px;top:96px;width:444px;height:1px;background:#696969"></div>
<div class="a" style="left:202px;top:95px;width:1px;height:338px;background:#a0a0a0"></div>
<div class="a" style="left:203px;top:96px;width:1px;height:337px;background:#696969"></div>
<div class="a" style="left:202px;top:431px;width:445px;height:1px;background:#a0a0a0"></div>
<div class="a" style="left:203px;top:432px;width:444px;height:1px;background:#696969"></div>
<div class="a" style="left:207px;top:100px;width:440px;height:330px;background:#000"></div>
<div class="a" style="left:0px;top:438px;width:199px;height:120px;background:#fff"></div>
<div class="a" style="left:0px;top:438px;width:198px;height:1px;background:#a0a0a0"></div>
<div class="a" style="left:0px;top:439px;width:197px;height:1px;background:#696969"></div>
<div class="a" style="left:0px;top:439px;width:1px;height:118px;background:#696969"></div>
<div class="a" style="left:197px;top:439px;width:1px;height:118px;background:#f0f0f0"></div>
<div class="a" style="left:198px;top:439px;width:1px;height:118px;background:#fff"></div>
<div class="a" style="left:1px;top:509px;width:195px;height:48px;background:#f0f0f0"></div>
<div class="a" style="left:202px;top:438px;width:445px;height:120px;background:#fff"></div>
<div class="a" style="left:202px;top:438px;width:445px;height:1px;background:#a0a0a0"></div>
<div class="a" style="left:203px;top:439px;width:444px;height:1px;background:#696969"></div>
<div class="a" style="left:202px;top:438px;width:1px;height:119px;background:#a0a0a0"></div>
<div class="a" style="left:203px;top:439px;width:1px;height:118px;background:#696969"></div>
<div class="a" style="left:203px;top:556px;width:444px;height:1px;background:#696969"></div>
<div class="a" style="left:0px;top:557px;width:647px;height:2px;background:#fff"></div>
<div class="a" style="left:0px;top:559px;width:647px;height:1px;background:#d8d8d8"></div>
<svg class="a" style="left:207px;top:100px" width="440" height="330" viewBox="207 100 440 330" shape-rendering="crispEdges"><path fill="#00ff00" d="M341 154h93v1h-93zM341 154h1v74h-1zM340 229h1v1h-1zM339 230h1v1h-1zM338 231h1v1h-1zM337 232h1v1h-1zM336 233h1v1h-1zM335 234h1v1h-1zM334 235h1v1h-1zM333 236h1v1h-1zM365 154h1v65h-1zM399 154h1v65h-1zM433 154h1v65h-1zM496 154h92v1h-92zM496 154h1v74h-1zM495 229h1v1h-1zM494 230h1v1h-1zM493 231h1v1h-1zM492 232h1v1h-1zM491 233h1v1h-1zM490 234h1v1h-1zM489 235h1v1h-1zM488 236h1v1h-1zM519 154h1v65h-1zM553 154h1v65h-1zM587 154h1v65h-1zM341 251h93v1h-93zM341 251h1v74h-1zM340 326h1v1h-1zM339 327h1v1h-1zM338 328h1v1h-1zM337 329h1v1h-1zM336 330h1v1h-1zM335 331h1v1h-1zM334 332h1v1h-1zM333 333h1v1h-1zM365 251h1v72h-1zM399 251h1v72h-1zM433 251h1v72h-1zM496 251h92v1h-92zM496 251h1v74h-1zM495 326h1v1h-1zM494 327h1v1h-1zM493 328h1v1h-1zM492 329h1v1h-1zM491 330h1v1h-1zM490 331h1v1h-1zM489 332h1v1h-1zM488 333h1v1h-1zM519 251h1v72h-1zM553 251h1v72h-1zM587 251h1v72h-1zM346 357h87v1h-87zM345 358h1v1h-1zM344 359h1v1h-1zM343 360h1v1h-1zM342 361h1v1h-1zM341 362h1v1h-1zM340 363h1v1h-1zM339 364h1v1h-1zM338 365h1v1h-1zM337 366h1v1h-1zM336 367h1v1h-1zM335 368h1v1h-1zM334 369h1v1h-1zM333 370h1v1h-1zM367 351h1v6h-1zM388 351h1v6h-1zM410 351h1v6h-1zM431 351h1v6h-1z"/><path fill="#ffff00" d="M344 229h1v1h-1zM342 231h1v1h-1zM340 233h1v1h-1zM338 235h1v1h-1zM342 228h1v1h-1zM343 228h1v1h-1zM344 228h1v1h-1zM345 228h1v1h-1zM346 228h1v1h-1zM347 228h1v1h-1zM349 228h1v1h-1zM351 228h1v1h-1zM353 228h1v1h-1zM354 228h1v1h-1zM355 228h1v1h-1zM356 228h1v1h-1zM357 228h1v1h-1zM358 228h1v1h-1zM360 228h1v1h-1zM362 228h1v1h-1zM364 228h1v1h-1zM365 228h1v1h-1zM366 228h1v1h-1zM367 228h1v1h-1zM368 228h1v1h-1zM369 228h1v1h-1zM371 228h1v1h-1zM373 228h1v1h-1zM375 228h1v1h-1zM376 228h1v1h-1zM377 228h1v1h-1zM378 228h1v1h-1zM379 228h1v1h-1zM380 228h1v1h-1zM382 228h1v1h-1zM384 228h1v1h-1zM386 228h1v1h-1zM387 228h1v1h-1zM388 228h1v1h-1zM389 228h1v1h-1zM390 228h1v1h-1zM391 228h1v1h-1zM393 228h1v1h-1zM395 228h1v1h-1zM397 228h1v1h-1zM398 228h1v1h-1zM399 228h1v1h-1zM400 228h1v1h-1zM401 228h1v1h-1zM402 228h1v1h-1zM404 228h1v1h-1zM406 228h1v1h-1zM408 228h1v1h-1zM409 228h1v1h-1zM410 228h1v1h-1zM411 228h1v1h-1zM412 228h1v1h-1zM413 228h1v1h-1zM415 228h1v1h-1zM417 228h1v1h-1zM419 228h1v1h-1zM420 228h1v1h-1zM421 228h1v1h-1zM422 228h1v1h-1zM423 228h1v1h-1zM424 228h1v1h-1zM426 228h1v1h-1zM428 228h1v1h-1zM430 228h1v1h-1zM431 228h1v1h-1zM432 228h1v1h-1zM433 228h1v1h-1zM434 228h1v1h-1zM365 219h1v9h-1zM366 168h1v1h-1zM366 170h1v1h-1zM366 172h1v1h-1zM366 174h1v8h-1zM366 186h1v1h-1zM366 188h1v1h-1zM366 190h1v1h-1zM366 192h1v9h-1zM366 205h1v1h-1zM366 207h1v1h-1zM366 209h1v1h-1zM366 211h1v8h-1zM366 223h1v1h-1zM366 225h1v1h-1zM366 227h1v1h-1zM366 229h1v0h-1zM399 219h1v9h-1zM400 168h1v1h-1zM400 170h1v1h-1zM400 172h1v1h-1zM400 174h1v8h-1zM400 186h1v1h-1zM400 188h1v1h-1zM400 190h1v1h-1zM400 192h1v9h-1zM400 205h1v1h-1zM400 207h1v1h-1zM400 209h1v1h-1zM400 211h1v8h-1zM400 223h1v1h-1zM400 225h1v1h-1zM400 227h1v1h-1zM400 229h1v0h-1zM433 219h1v9h-1zM434 168h1v1h-1zM434 170h1v1h-1zM434 172h1v1h-1zM434 174h1v8h-1zM434 186h1v1h-1zM434 188h1v1h-1zM434 190h1v1h-1zM434 192h1v9h-1zM434 205h1v1h-1zM434 207h1v1h-1zM434 209h1v1h-1zM434 211h1v8h-1zM434 223h1v1h-1zM434 225h1v1h-1zM434 227h1v1h-1zM434 229h1v0h-1zM499 229h1v1h-1zM497 231h1v1h-1zM495 233h1v1h-1zM493 235h1v1h-1zM497 228h1v1h-1zM498 228h1v1h-1zM499 228h1v1h-1zM500 228h1v1h-1zM501 228h1v1h-1zM502 228h1v1h-1zM504 228h1v1h-1zM506 228h1v1h-1zM508 228h1v1h-1zM509 228h1v1h-1zM510 228h1v1h-1zM511 228h1v1h-1zM512 228h1v1h-1zM513 228h1v1h-1zM515 228h1v1h-1zM517 228h1v1h-1zM519 228h1v1h-1zM520 228h1v1h-1zM521 228h1v1h-1zM522 228h1v1h-1zM523 228h1v1h-1zM524 228h1v1h-1zM526 228h1v1h-1zM528 228h1v1h-1zM530 228h1v1h-1zM531 228h1v1h-1zM532 228h1v1h-1zM533 228h1v1h-1zM534 228h1v1h-1zM535 228h1v1h-1zM537 228h1v1h-1zM539 228h1v1h-1zM541 228h1v1h-1zM542 228h1v1h-1zM543 228h1v1h-1zM544 228h1v1h-1zM545 228h1v1h-1zM546 228h1v1h-1zM548 228h1v1h-1zM550 228h1v1h-1zM552 228h1v1h-1zM553 228h1v1h-1zM554 228h1v1h-1zM555 228h1v1h-1zM556 228h1v1h-1zM557 228h1v1h-1zM559 228h1v1h-1zM561 228h1v1h-1zM563 228h1v1h-1zM564 228h1v1h-1zM565 228h1v1h-1zM566 228h1v1h-1zM567 228h1v1h-1zM568 228h1v1h-1zM570 228h1v1h-1zM572 228h1v1h-1zM574 228h1v1h-1zM575 228h1v1h-1zM576 228h1v1h-1zM577 228h1v1h-1zM578 228h1v1h-1zM579 228h1v1h-1zM581 228h1v1h-1zM583 228h1v1h-1zM585 228h1v1h-1zM586 228h1v1h-1zM587 228h1v1h-1zM588 228h1v1h-1zM519 219h1v9h-1zM520 168h1v1h-1zM520 170h1v1h-1zM520 172h1v1h-1zM520 174h1v8h-1zM520 186h1v1h-1zM520 188h1v1h-1zM520 190h1v1h-1zM520 192h1v9h-1zM520 205h1v1h-1zM520 207h1v1h-1zM520 209h1v1h-1zM520 211h1v8h-1zM520 223h1v1h-1zM520 225h1v1h-1zM520 227h1v1h-1zM520 229h1v0h-1zM553 219h1v9h-1zM554 168h1v1h-1zM554 170h1v1h-1zM554 172h1v1h-1zM554 174h1v8h-1zM554 186h1v1h-1zM554 188h1v1h-1zM554 190h1v1h-1zM554 192h1v9h-1zM554 205h1v1h-1zM554 207h1v1h-1zM554 209h1v1h-1zM554 211h1v8h-1zM554 223h1v1h-1zM554 225h1v1h-1zM554 227h1v1h-1zM554 229h1v0h-1zM587 219h1v9h-1zM588 168h1v1h-1zM588 170h1v1h-1zM588 172h1v1h-1zM588 174h1v8h-1zM588 186h1v1h-1zM588 188h1v1h-1zM588 190h1v1h-1zM588 192h1v9h-1zM588 205h1v1h-1zM588 207h1v1h-1zM588 209h1v1h-1zM588 211h1v8h-1zM588 223h1v1h-1zM588 225h1v1h-1zM588 227h1v1h-1zM588 229h1v0h-1zM344 326h1v1h-1zM342 328h1v1h-1zM340 330h1v1h-1zM338 332h1v1h-1zM342 325h1v1h-1zM343 325h1v1h-1zM344 325h1v1h-1zM345 325h1v1h-1zM346 325h1v1h-1zM347 325h1v1h-1zM349 325h1v1h-1zM351 325h1v1h-1zM353 325h1v1h-1zM354 325h1v1h-1zM355 325h1v1h-1zM356 325h1v1h-1zM357 325h1v1h-1zM358 325h1v1h-1zM360 325h1v1h-1zM362 325h1v1h-1zM364 325h1v1h-1zM365 325h1v1h-1zM366 325h1v1h-1zM367 325h1v1h-1zM368 325h1v1h-1zM369 325h1v1h-1zM371 325h1v1h-1zM373 325h1v1h-1zM375 325h1v1h-1zM376 325h1v1h-1zM377 325h1v1h-1zM378 325h1v1h-1zM379 325h1v1h-1zM380 325h1v1h-1zM382 325h1v1h-1zM384 325h1v1h-1zM386 325h1v1h-1zM387 325h1v1h-1zM388 325h1v1h-1zM389 325h1v1h-1zM390 325h1v1h-1zM391 325h1v1h-1zM393 325h1v1h-1zM395 325h1v1h-1zM397 325h1v1h-1zM398 325h1v1h-1zM399 325h1v1h-1zM400 325h1v1h-1zM401 325h1v1h-1zM402 325h1v1h-1zM404 325h1v1h-1zM406 325h1v1h-1zM408 325h1v1h-1zM409 325h1v1h-1zM410 325h1v1h-1zM411 325h1v1h-1zM412 325h1v1h-1zM413 325h1v1h-1zM415 325h1v1h-1zM417 325h1v1h-1zM419 325h1v1h-1zM420 325h1v1h-1zM421 325h1v1h-1zM422 325h1v1h-1zM423 325h1v1h-1zM424 325h1v1h-1zM426 325h1v1h-1zM428 325h1v1h-1zM430 325h1v1h-1zM431 325h1v1h-1zM432 325h1v1h-1zM433 325h1v1h-1zM434 325h1v1h-1zM365 323h1v2h-1zM366 266h1v1h-1zM366 268h1v1h-1zM366 270h1v1h-1zM366 272h1v8h-1zM366 284h1v1h-1zM366 286h1v1h-1zM366 288h1v1h-1zM366 290h1v8h-1zM366 302h1v1h-1zM366 304h1v1h-1zM366 306h1v1h-1zM366 308h1v9h-1zM366 321h1v1h-1zM366 323h1v1h-1zM366 325h1v1h-1zM366 327h1v-1h-1zM399 323h1v2h-1zM400 266h1v1h-1zM400 268h1v1h-1zM400 270h1v1h-1zM400 272h1v8h-1zM400 284h1v1h-1zM400 286h1v1h-1zM400 288h1v1h-1zM400 290h1v8h-1zM400 302h1v1h-1zM400 304h1v1h-1zM400 306h1v1h-1zM400 308h1v9h-1zM400 321h1v1h-1zM400 323h1v1h-1zM400 325h1v1h-1zM400 327h1v-1h-1zM433 323h1v2h-1zM434 266h1v1h-1zM434 268h1v1h-1zM434 270h1v1h-1zM434 272h1v8h-1zM434 284h1v1h-1zM434 286h1v1h-1zM434 288h1v1h-1zM434 290h1v8h-1zM434 302h1v1h-1zM434 304h1v1h-1zM434 306h1v1h-1zM434 308h1v9h-1zM434 321h1v1h-1zM434 323h1v1h-1zM434 325h1v1h-1zM434 327h1v-1h-1zM499 326h1v1h-1zM497 328h1v1h-1zM495 330h1v1h-1zM493 332h1v1h-1zM497 325h1v1h-1zM498 325h1v1h-1zM499 325h1v1h-1zM500 325h1v1h-1zM501 325h1v1h-1zM502 325h1v1h-1zM504 325h1v1h-1zM506 325h1v1h-1zM508 325h1v1h-1zM509 325h1v1h-1zM510 325h1v1h-1zM511 325h1v1h-1zM512 325h1v1h-1zM513 325h1v1h-1zM515 325h1v1h-1zM517 325h1v1h-1zM519 325h1v1h-1zM520 325h1v1h-1zM521 325h1v1h-1zM522 325h1v1h-1zM523 325h1v1h-1zM524 325h1v1h-1zM526 325h1v1h-1zM528 325h1v1h-1zM530 325h1v1h-1zM531 325h1v1h-1zM532 325h1v1h-1zM533 325h1v1h-1zM534 325h1v1h-1zM535 325h1v1h-1zM537 325h1v1h-1zM539 325h1v1h-1zM541 325h1v1h-1zM542 325h1v1h-1zM543 325h1v1h-1zM544 325h1v1h-1zM545 325h1v1h-1zM546 325h1v1h-1zM548 325h1v1h-1zM550 325h1v1h-1zM552 325h1v1h-1zM553 325h1v1h-1zM554 325h1v1h-1zM555 325h1v1h-1zM556 325h1v1h-1zM557 325h1v1h-1zM559 325h1v1h-1zM561 325h1v1h-1zM563 325h1v1h-1zM564 325h1v1h-1zM565 325h1v1h-1zM566 325h1v1h-1zM567 325h1v1h-1zM568 325h1v1h-1zM570 325h1v1h-1zM572 325h1v1h-1zM574 325h1v1h-1zM575 325h1v1h-1zM576 325h1v1h-1zM577 325h1v1h-1zM578 325h1v1h-1zM579 325h1v1h-1zM581 325h1v1h-1zM583 325h1v1h-1zM585 325h1v1h-1zM586 325h1v1h-1zM587 325h1v1h-1zM588 325h1v1h-1zM519 323h1v2h-1zM520 266h1v1h-1zM520 268h1v1h-1zM520 270h1v1h-1zM520 272h1v8h-1zM520 284h1v1h-1zM520 286h1v1h-1zM520 288h1v1h-1zM520 290h1v8h-1zM520 302h1v1h-1zM520 304h1v1h-1zM520 306h1v1h-1zM520 308h1v9h-1zM520 321h1v1h-1zM520 323h1v1h-1zM520 325h1v1h-1zM520 327h1v-1h-1zM553 323h1v2h-1zM554 266h1v1h-1zM554 268h1v1h-1zM554 270h1v1h-1zM554 272h1v8h-1zM554 284h1v1h-1zM554 286h1v1h-1zM554 288h1v1h-1zM554 290h1v8h-1zM554 302h1v1h-1zM554 304h1v1h-1zM554 306h1v1h-1zM554 308h1v9h-1zM554 321h1v1h-1zM554 323h1v1h-1zM554 325h1v1h-1zM554 327h1v-1h-1zM587 323h1v2h-1zM588 266h1v1h-1zM588 268h1v1h-1zM588 270h1v1h-1zM588 272h1v8h-1zM588 284h1v1h-1zM588 286h1v1h-1zM588 288h1v1h-1zM588 290h1v8h-1zM588 302h1v1h-1zM588 304h1v1h-1zM588 306h1v1h-1zM588 308h1v9h-1zM588 321h1v1h-1zM588 323h1v1h-1zM588 325h1v1h-1zM588 327h1v-1h-1zM349 361h1v1h-1zM350 361h1v1h-1zM351 361h1v1h-1zM352 361h1v1h-1zM353 361h1v1h-1zM354 361h1v1h-1zM356 361h1v1h-1zM358 361h1v1h-1zM359 361h1v1h-1zM360 361h1v1h-1zM361 361h1v1h-1zM362 361h1v1h-1zM363 361h1v1h-1zM365 361h1v1h-1zM367 361h1v1h-1zM368 361h1v1h-1zM369 361h1v1h-1zM370 361h1v1h-1zM371 361h1v1h-1zM372 361h1v1h-1zM374 361h1v1h-1zM376 361h1v1h-1zM377 361h1v1h-1zM378 361h1v1h-1zM379 361h1v1h-1zM380 361h1v1h-1zM381 361h1v1h-1zM383 361h1v1h-1zM385 361h1v1h-1zM386 361h1v1h-1zM387 361h1v1h-1zM388 361h1v1h-1zM389 361h1v1h-1zM390 361h1v1h-1zM392 361h1v1h-1zM394 361h1v1h-1zM395 361h1v1h-1zM396 361h1v1h-1zM397 361h1v1h-1zM398 361h1v1h-1zM399 361h1v1h-1zM401 361h1v1h-1zM403 361h1v1h-1zM404 361h1v1h-1zM405 361h1v1h-1zM406 361h1v1h-1zM407 361h1v1h-1zM408 361h1v1h-1zM410 361h1v1h-1zM412 361h1v1h-1zM413 361h1v1h-1zM414 361h1v1h-1zM415 361h1v1h-1zM416 361h1v1h-1zM417 361h1v1h-1zM419 361h1v1h-1zM421 361h1v1h-1zM422 361h1v1h-1zM423 361h1v1h-1zM424 361h1v1h-1zM425 361h1v1h-1zM426 361h1v1h-1zM428 361h1v1h-1zM430 361h1v1h-1zM431 361h1v1h-1zM432 361h1v1h-1zM433 361h1v1h-1zM347 362h1v1h-1zM345 364h1v1h-1zM343 366h1v1h-1zM341 368h1v1h-1zM339 370h1v1h-1zM369 351h1v1h-1zM369 353h1v1h-1zM369 355h1v1h-1zM369 357h1v1h-1zM369 359h1v1h-1zM369 358h1v4h-1zM390 351h1v1h-1zM390 353h1v1h-1zM390 355h1v1h-1zM390 357h1v1h-1zM390 359h1v1h-1zM390 358h1v4h-1zM412 351h1v1h-1zM412 353h1v1h-1zM412 355h1v1h-1zM412 357h1v1h-1zM412 359h1v1h-1zM412 358h1v4h-1zM433 351h1v1h-1zM433 353h1v1h-1zM433 355h1v1h-1zM433 357h1v1h-1zM433 359h1v1h-1zM433 358h1v4h-1z"/><path fill="#00ffff" d="M354 164h5v1h-5zM354 168h5v1h-5zM354 164h1v5h-1zM358 164h1v5h-1zM371 164h5v1h-5zM371 168h5v1h-5zM371 164h1v5h-1zM375 164h1v5h-1zM376 165h1v3h-1zM359 165h13v1h-13zM359 167h13v1h-13zM388 164h5v1h-5zM388 168h5v1h-5zM388 164h1v5h-1zM392 164h1v5h-1zM405 164h5v1h-5zM405 168h5v1h-5zM405 164h1v5h-1zM409 164h1v5h-1zM410 165h1v3h-1zM393 165h13v1h-13zM393 167h13v1h-13zM354 182h5v1h-5zM354 186h5v1h-5zM354 182h1v5h-1zM358 182h1v5h-1zM371 182h5v1h-5zM371 186h5v1h-5zM371 182h1v5h-1zM375 182h1v5h-1zM376 183h1v3h-1zM359 183h13v1h-13zM359 185h13v1h-13zM388 182h5v1h-5zM388 186h5v1h-5zM388 182h1v5h-1zM392 182h1v5h-1zM405 182h5v1h-5zM405 186h5v1h-5zM405 182h1v5h-1zM409 182h1v5h-1zM410 183h1v3h-1zM393 183h13v1h-13zM393 185h13v1h-13zM422 182h5v1h-5zM422 186h5v1h-5zM422 182h1v5h-1zM426 182h1v5h-1zM439 182h5v1h-5zM439 186h5v1h-5zM439 182h1v5h-1zM443 182h1v5h-1zM444 183h1v3h-1zM427 183h13v1h-13zM427 185h13v1h-13zM354 201h23v1h-23zM354 204h23v1h-23zM354 201h1v4h-1zM376 201h1v4h-1zM358 201h1v4h-1zM373 201h1v4h-1zM361 203h9v1h-9zM388 201h23v1h-23zM388 204h23v1h-23zM388 201h1v4h-1zM410 201h1v4h-1zM392 201h1v4h-1zM407 201h1v4h-1zM395 203h9v1h-9zM422 201h23v1h-23zM422 204h23v1h-23zM422 201h1v4h-1zM444 201h1v4h-1zM426 201h1v4h-1zM441 201h1v4h-1zM429 203h9v1h-9zM354 219h5v1h-5zM354 223h5v1h-5zM354 219h1v5h-1zM358 219h1v5h-1zM371 219h5v1h-5zM371 223h5v1h-5zM371 219h1v5h-1zM375 219h1v5h-1zM376 220h1v3h-1zM359 220h13v1h-13zM359 222h13v1h-13zM388 219h5v1h-5zM388 223h5v1h-5zM388 219h1v5h-1zM392 219h1v5h-1zM405 219h5v1h-5zM405 223h5v1h-5zM405 219h1v5h-1zM409 219h1v5h-1zM410 220h1v3h-1zM393 220h13v1h-13zM393 222h13v1h-13zM422 219h5v1h-5zM422 223h5v1h-5zM422 219h1v5h-1zM426 219h1v5h-1zM439 219h5v1h-5zM439 223h5v1h-5zM439 219h1v5h-1zM443 219h1v5h-1zM444 220h1v3h-1zM427 220h13v1h-13zM427 222h13v1h-13zM508 164h5v1h-5zM508 168h5v1h-5zM508 164h1v5h-1zM512 164h1v5h-1zM525 164h5v1h-5zM525 168h5v1h-5zM525 164h1v5h-1zM529 164h1v5h-1zM530 165h1v3h-1zM513 165h13v1h-13zM513 167h13v1h-13zM542 164h5v1h-5zM542 168h5v1h-5zM542 164h1v5h-1zM546 164h1v5h-1zM559 164h5v1h-5zM559 168h5v1h-5zM559 164h1v5h-1zM563 164h1v5h-1zM564 165h1v3h-1zM547 165h13v1h-13zM547 167h13v1h-13zM576 164h5v1h-5zM576 168h5v1h-5zM576 164h1v5h-1zM580 164h1v5h-1zM593 164h5v1h-5zM593 168h5v1h-5zM593 164h1v5h-1zM597 164h1v5h-1zM598 165h1v3h-1zM581 165h13v1h-13zM581 167h13v1h-13zM508 182h5v1h-5zM508 186h5v1h-5zM508 182h1v5h-1zM512 182h1v5h-1zM525 182h5v1h-5zM525 186h5v1h-5zM525 182h1v5h-1zM529 182h1v5h-1zM530 183h1v3h-1zM513 183h13v1h-13zM513 185h13v1h-13zM542 182h5v1h-5zM542 186h5v1h-5zM542 182h1v5h-1zM546 182h1v5h-1zM559 182h5v1h-5zM559 186h5v1h-5zM559 182h1v5h-1zM563 182h1v5h-1zM564 183h1v3h-1zM547 183h13v1h-13zM547 185h13v1h-13zM576 182h5v1h-5zM576 186h5v1h-5zM576 182h1v5h-1zM580 182h1v5h-1zM593 182h5v1h-5zM593 186h5v1h-5zM593 182h1v5h-1zM597 182h1v5h-1zM598 183h1v3h-1zM581 183h13v1h-13zM581 185h13v1h-13zM508 201h23v1h-23zM508 204h23v1h-23zM508 201h1v4h-1zM530 201h1v4h-1zM512 201h1v4h-1zM527 201h1v4h-1zM515 203h9v1h-9zM542 201h23v1h-23zM542 204h23v1h-23zM542 201h1v4h-1zM564 201h1v4h-1zM546 201h1v4h-1zM561 201h1v4h-1zM549 203h9v1h-9zM576 201h23v1h-23zM576 204h23v1h-23zM576 201h1v4h-1zM598 201h1v4h-1zM580 201h1v4h-1zM595 201h1v4h-1zM583 203h9v1h-9zM508 219h5v1h-5zM508 223h5v1h-5zM508 219h1v5h-1zM512 219h1v5h-1zM525 219h5v1h-5zM525 223h5v1h-5zM525 219h1v5h-1zM529 219h1v5h-1zM530 220h1v3h-1zM513 220h13v1h-13zM513 222h13v1h-13zM542 219h5v1h-5zM542 223h5v1h-5zM542 219h1v5h-1zM546 219h1v5h-1zM559 219h5v1h-5zM559 223h5v1h-5zM559 219h1v5h-1zM563 219h1v5h-1zM564 220h1v3h-1zM547 220h13v1h-13zM547 222h13v1h-13zM576 219h5v1h-5zM576 223h5v1h-5zM576 219h1v5h-1zM580 219h1v5h-1zM593 219h5v1h-5zM593 223h5v1h-5zM593 219h1v5h-1zM597 219h1v5h-1zM598 220h1v3h-1zM581 220h13v1h-13zM581 222h13v1h-13zM354 262h23v1h-23zM354 265h23v1h-23zM354 262h1v4h-1zM376 262h1v4h-1zM358 262h1v4h-1zM373 262h1v4h-1zM361 264h9v1h-9zM388 262h23v1h-23zM388 265h23v1h-23zM388 262h1v4h-1zM410 262h1v4h-1zM392 262h1v4h-1zM407 262h1v4h-1zM395 264h9v1h-9zM422 262h23v1h-23zM422 265h23v1h-23zM422 262h1v4h-1zM444 262h1v4h-1zM426 262h1v4h-1zM441 262h1v4h-1zM429 264h9v1h-9zM354 280h5v1h-5zM354 284h5v1h-5zM354 280h1v5h-1zM358 280h1v5h-1zM371 280h5v1h-5zM371 284h5v1h-5zM371 280h1v5h-1zM375 280h1v5h-1zM376 281h1v3h-1zM359 281h13v1h-13zM359 283h13v1h-13zM388 280h5v1h-5zM388 284h5v1h-5zM388 280h1v5h-1zM392 280h1v5h-1zM405 280h5v1h-5zM405 284h5v1h-5zM405 280h1v5h-1zM409 280h1v5h-1zM410 281h1v3h-1zM393 281h13v1h-13zM393 283h13v1h-13zM422 280h5v1h-5zM422 284h5v1h-5zM422 280h1v5h-1zM426 280h1v5h-1zM439 280h5v1h-5zM439 284h5v1h-5zM439 280h1v5h-1zM443 280h1v5h-1zM444 281h1v3h-1zM427 281h13v1h-13zM427 283h13v1h-13zM354 298h5v1h-5zM354 302h5v1h-5zM354 298h1v5h-1zM358 298h1v5h-1zM371 298h5v1h-5zM371 302h5v1h-5zM371 298h1v5h-1zM375 298h1v5h-1zM376 299h1v3h-1zM359 299h13v1h-13zM359 301h13v1h-13zM388 298h5v1h-5zM388 302h5v1h-5zM388 298h1v5h-1zM392 298h1v5h-1zM405 298h5v1h-5zM405 302h5v1h-5zM405 298h1v5h-1zM409 298h1v5h-1zM410 299h1v3h-1zM393 299h13v1h-13zM393 301h13v1h-13zM422 298h5v1h-5zM422 302h5v1h-5zM422 298h1v5h-1zM426 298h1v5h-1zM439 298h5v1h-5zM439 302h5v1h-5zM439 298h1v5h-1zM443 298h1v5h-1zM444 299h1v3h-1zM427 299h13v1h-13zM427 301h13v1h-13zM354 317h23v1h-23zM354 320h23v1h-23zM354 317h1v4h-1zM376 317h1v4h-1zM358 317h1v4h-1zM373 317h1v4h-1zM361 319h9v1h-9zM388 317h23v1h-23zM388 320h23v1h-23zM388 317h1v4h-1zM410 317h1v4h-1zM392 317h1v4h-1zM407 317h1v4h-1zM395 319h9v1h-9zM422 317h23v1h-23zM422 320h23v1h-23zM422 317h1v4h-1zM444 317h1v4h-1zM426 317h1v4h-1zM441 317h1v4h-1zM429 319h9v1h-9zM508 262h23v1h-23zM508 265h23v1h-23zM508 262h1v4h-1zM530 262h1v4h-1zM512 262h1v4h-1zM527 262h1v4h-1zM515 264h9v1h-9zM542 262h23v1h-23zM542 265h23v1h-23zM542 262h1v4h-1zM564 262h1v4h-1zM546 262h1v4h-1zM561 262h1v4h-1zM549 264h9v1h-9zM576 262h23v1h-23zM576 265h23v1h-23zM576 262h1v4h-1zM598 262h1v4h-1zM580 262h1v4h-1zM595 262h1v4h-1zM583 264h9v1h-9zM508 280h5v1h-5zM508 284h5v1h-5zM508 280h1v5h-1zM512 280h1v5h-1zM525 280h5v1h-5zM525 284h5v1h-5zM525 280h1v5h-1zM529 280h1v5h-1zM530 281h1v3h-1zM513 281h13v1h-13zM513 283h13v1h-13zM542 280h5v1h-5zM542 284h5v1h-5zM542 280h1v5h-1zM546 280h1v5h-1zM559 280h5v1h-5zM559 284h5v1h-5zM559 280h1v5h-1zM563 280h1v5h-1zM564 281h1v3h-1zM547 281h13v1h-13zM547 283h13v1h-13zM576 280h5v1h-5zM576 284h5v1h-5zM576 280h1v5h-1zM580 280h1v5h-1zM593 280h5v1h-5zM593 284h5v1h-5zM593 280h1v5h-1zM597 280h1v5h-1zM598 281h1v3h-1zM581 281h13v1h-13zM581 283h13v1h-13zM508 298h5v1h-5zM508 302h5v1h-5zM508 298h1v5h-1zM512 298h1v5h-1zM525 298h5v1h-5zM525 302h5v1h-5zM525 298h1v5h-1zM529 298h1v5h-1zM530 299h1v3h-1zM513 299h13v1h-13zM513 301h13v1h-13zM542 298h5v1h-5zM542 302h5v1h-5zM542 298h1v5h-1zM546 298h1v5h-1zM559 298h5v1h-5zM559 302h5v1h-5zM559 298h1v5h-1zM563 298h1v5h-1zM564 299h1v3h-1zM547 299h13v1h-13zM547 301h13v1h-13zM576 298h5v1h-5zM576 302h5v1h-5zM576 298h1v5h-1zM580 298h1v5h-1zM593 298h5v1h-5zM593 302h5v1h-5zM593 298h1v5h-1zM597 298h1v5h-1zM598 299h1v3h-1zM581 299h13v1h-13zM581 301h13v1h-13zM508 317h23v1h-23zM508 320h23v1h-23zM508 317h1v4h-1zM530 317h1v4h-1zM512 317h1v4h-1zM527 317h1v4h-1zM515 319h9v1h-9zM542 317h23v1h-23zM542 320h23v1h-23zM542 317h1v4h-1zM564 317h1v4h-1zM546 317h1v4h-1zM561 317h1v4h-1zM549 319h9v1h-9zM576 317h23v1h-23zM576 320h23v1h-23zM576 317h1v4h-1zM598 317h1v4h-1zM580 317h1v4h-1zM595 317h1v4h-1zM583 319h9v1h-9z"/><path fill="#ffffff" d="M359 166h2v1h-2zM369 166h2v1h-2zM393 166h2v1h-2zM403 166h2v1h-2zM427 166h2v1h-2zM437 166h2v1h-2zM359 184h2v1h-2zM369 184h2v1h-2zM393 184h2v1h-2zM403 184h2v1h-2zM427 184h2v1h-2zM437 184h2v1h-2zM359 202h2v2h-2zM371 202h2v2h-2zM393 202h2v2h-2zM405 202h2v2h-2zM427 202h2v2h-2zM439 202h2v2h-2zM359 221h2v1h-2zM369 221h2v1h-2zM393 221h2v1h-2zM403 221h2v1h-2zM427 221h2v1h-2zM437 221h2v1h-2zM360 158h2v1h-2zM363 158h2v1h-2zM361 159h4v1h-4zM360 172h2v1h-2zM363 172h2v1h-2zM361 173h4v1h-4zM367 175h2v1h-2zM369 175h2v1h-2zM368 176h3v1h-3zM394 158h2v1h-2zM397 158h2v1h-2zM395 159h4v1h-4zM394 172h2v1h-2zM397 172h2v1h-2zM395 173h4v1h-4zM401 175h2v1h-2zM403 175h2v1h-2zM402 176h3v1h-3zM428 158h2v1h-2zM431 158h2v1h-2zM429 159h4v1h-4zM428 172h2v1h-2zM431 172h2v1h-2zM429 173h4v1h-4zM435 175h2v1h-2zM437 175h2v1h-2zM436 176h3v1h-3zM345 167h4v1h-4zM346 168h2v2h-2zM343 170h6v1h-6zM360 190h2v1h-2zM363 190h2v1h-2zM361 191h4v1h-4zM367 193h2v1h-2zM369 193h2v1h-2zM368 194h3v1h-3zM394 190h2v1h-2zM397 190h2v1h-2zM395 191h4v1h-4zM401 193h2v1h-2zM403 193h2v1h-2zM402 194h3v1h-3zM428 190h2v1h-2zM431 190h2v1h-2zM429 191h4v1h-4zM435 193h2v1h-2zM437 193h2v1h-2zM436 194h3v1h-3zM345 185h4v1h-4zM346 186h2v2h-2zM343 188h6v1h-6zM360 209h2v1h-2zM363 209h2v1h-2zM361 210h4v1h-4zM367 212h2v1h-2zM369 212h2v1h-2zM368 213h3v1h-3zM394 209h2v1h-2zM397 209h2v1h-2zM395 210h4v1h-4zM401 212h2v1h-2zM403 212h2v1h-2zM402 213h3v1h-3zM428 209h2v1h-2zM431 209h2v1h-2zM429 210h4v1h-4zM435 212h2v1h-2zM437 212h2v1h-2zM436 213h3v1h-3zM345 204h4v1h-4zM346 205h2v2h-2zM343 207h6v1h-6zM366 225h2v1h-2zM369 225h2v1h-2zM367 226h4v1h-4zM400 225h2v1h-2zM403 225h2v1h-2zM401 226h4v1h-4zM434 225h2v1h-2zM437 225h2v1h-2zM435 226h4v1h-4zM345 222h4v1h-4zM346 223h2v2h-2zM343 225h6v1h-6zM382 152h6v2h-6zM416 152h6v2h-6zM354 229h2v1h-2zM357 229h2v1h-2zM355 230h4v1h-4zM384 229h2v1h-2zM387 229h2v1h-2zM385 230h4v1h-4zM418 229h2v1h-2zM421 229h2v1h-2zM419 230h4v1h-4zM361 233h2v1h-2zM364 233h2v1h-2zM362 234h4v1h-4zM398 233h2v1h-2zM401 233h2v1h-2zM399 234h4v1h-4zM430 233h2v1h-2zM433 233h2v1h-2zM431 234h4v1h-4zM340 230h4v3h-4zM513 166h2v1h-2zM523 166h2v1h-2zM547 166h2v1h-2zM557 166h2v1h-2zM581 166h2v1h-2zM591 166h2v1h-2zM513 184h2v1h-2zM523 184h2v1h-2zM547 184h2v1h-2zM557 184h2v1h-2zM581 184h2v1h-2zM591 184h2v1h-2zM513 202h2v2h-2zM525 202h2v2h-2zM547 202h2v2h-2zM559 202h2v2h-2zM581 202h2v2h-2zM593 202h2v2h-2zM513 221h2v1h-2zM523 221h2v1h-2zM547 221h2v1h-2zM557 221h2v1h-2zM581 221h2v1h-2zM591 221h2v1h-2zM514 158h2v1h-2zM517 158h2v1h-2zM515 159h4v1h-4zM514 172h2v1h-2zM517 172h2v1h-2zM515 173h4v1h-4zM521 175h2v1h-2zM523 175h2v1h-2zM522 176h3v1h-3zM548 158h2v1h-2zM551 158h2v1h-2zM549 159h4v1h-4zM548 172h2v1h-2zM551 172h2v1h-2zM549 173h4v1h-4zM555 175h2v1h-2zM557 175h2v1h-2zM556 176h3v1h-3zM582 158h2v1h-2zM585 158h2v1h-2zM583 159h4v1h-4zM582 172h2v1h-2zM585 172h2v1h-2zM583 173h4v1h-4zM589 175h2v1h-2zM591 175h2v1h-2zM590 176h3v1h-3zM500 167h4v1h-4zM501 168h2v2h-2zM498 170h6v1h-6zM514 190h2v1h-2zM517 190h2v1h-2zM515 191h4v1h-4zM521 193h2v1h-2zM523 193h2v1h-2zM522 194h3v1h-3zM548 190h2v1h-2zM551 190h2v1h-2zM549 191h4v1h-4zM555 193h2v1h-2zM557 193h2v1h-2zM556 194h3v1h-3zM582 190h2v1h-2zM585 190h2v1h-2zM583 191h4v1h-4zM589 193h2v1h-2zM591 193h2v1h-2zM590 194h3v1h-3zM500 185h4v1h-4zM501 186h2v2h-2zM498 188h6v1h-6zM514 209h2v1h-2zM517 209h2v1h-2zM515 210h4v1h-4zM521 212h2v1h-2zM523 212h2v1h-2zM522 213h3v1h-3zM548 209h2v1h-2zM551 209h2v1h-2zM549 210h4v1h-4zM555 212h2v1h-2zM557 212h2v1h-2zM556 213h3v1h-3zM582 209h2v1h-2zM585 209h2v1h-2zM583 210h4v1h-4zM589 212h2v1h-2zM591 212h2v1h-2zM590 213h3v1h-3zM500 204h4v1h-4zM501 205h2v2h-2zM498 207h6v1h-6zM520 225h2v1h-2zM523 225h2v1h-2zM521 226h4v1h-4zM554 225h2v1h-2zM557 225h2v1h-2zM555 226h4v1h-4zM588 225h2v1h-2zM591 225h2v1h-2zM589 226h4v1h-4zM500 222h4v1h-4zM501 223h2v2h-2zM498 225h6v1h-6zM537 152h6v2h-6zM571 152h6v2h-6zM509 229h2v1h-2zM512 229h2v1h-2zM510 230h4v1h-4zM539 229h2v1h-2zM542 229h2v1h-2zM540 230h4v1h-4zM573 229h2v1h-2zM576 229h2v1h-2zM574 230h4v1h-4zM516 233h2v1h-2zM519 233h2v1h-2zM517 234h4v1h-4zM553 233h2v1h-2zM556 233h2v1h-2zM554 234h4v1h-4zM585 233h2v1h-2zM588 233h2v1h-2zM586 234h4v1h-4zM495 230h4v3h-4zM359 263h2v2h-2zM371 263h2v2h-2zM393 263h2v2h-2zM405 263h2v2h-2zM427 263h2v2h-2zM439 263h2v2h-2zM359 282h2v1h-2zM369 282h2v1h-2zM393 282h2v1h-2zM403 282h2v1h-2zM427 282h2v1h-2zM437 282h2v1h-2zM359 300h2v1h-2zM369 300h2v1h-2zM393 300h2v1h-2zM403 300h2v1h-2zM427 300h2v1h-2zM437 300h2v1h-2zM359 318h2v2h-2zM371 318h2v2h-2zM393 318h2v2h-2zM405 318h2v2h-2zM427 318h2v2h-2zM439 318h2v2h-2zM360 256h2v1h-2zM363 256h2v1h-2zM361 257h4v1h-4zM360 270h2v1h-2zM363 270h2v1h-2zM361 271h4v1h-4zM367 273h2v1h-2zM369 273h2v1h-2zM368 274h3v1h-3zM394 256h2v1h-2zM397 256h2v1h-2zM395 257h4v1h-4zM394 270h2v1h-2zM397 270h2v1h-2zM395 271h4v1h-4zM401 273h2v1h-2zM403 273h2v1h-2zM402 274h3v1h-3zM428 256h2v1h-2zM431 256h2v1h-2zM429 257h4v1h-4zM428 270h2v1h-2zM431 270h2v1h-2zM429 271h4v1h-4zM435 273h2v1h-2zM437 273h2v1h-2zM436 274h3v1h-3zM345 265h4v1h-4zM346 266h2v2h-2zM343 268h6v1h-6zM360 288h2v1h-2zM363 288h2v1h-2zM361 289h4v1h-4zM367 291h2v1h-2zM369 291h2v1h-2zM368 292h3v1h-3zM394 288h2v1h-2zM397 288h2v1h-2zM395 289h4v1h-4zM401 291h2v1h-2zM403 291h2v1h-2zM402 292h3v1h-3zM428 288h2v1h-2zM431 288h2v1h-2zM429 289h4v1h-4zM435 291h2v1h-2zM437 291h2v1h-2zM436 292h3v1h-3zM345 283h4v1h-4zM346 284h2v2h-2zM343 286h6v1h-6zM360 306h2v1h-2zM363 306h2v1h-2zM361 307h4v1h-4zM367 309h2v1h-2zM369 309h2v1h-2zM368 310h3v1h-3zM394 306h2v1h-2zM397 306h2v1h-2zM395 307h4v1h-4zM401 309h2v1h-2zM403 309h2v1h-2zM402 310h3v1h-3zM428 306h2v1h-2zM431 306h2v1h-2zM429 307h4v1h-4zM435 309h2v1h-2zM437 309h2v1h-2zM436 310h3v1h-3zM345 301h4v1h-4zM346 302h2v2h-2zM343 304h6v1h-6zM366 323h2v1h-2zM369 323h2v1h-2zM367 324h4v1h-4zM400 323h2v1h-2zM403 323h2v1h-2zM401 324h4v1h-4zM434 323h2v1h-2zM437 323h2v1h-2zM435 324h4v1h-4zM345 320h4v1h-4zM346 321h2v2h-2zM343 323h6v1h-6zM382 249h6v2h-6zM416 249h6v2h-6zM354 326h2v1h-2zM357 326h2v1h-2zM355 327h4v1h-4zM384 326h2v1h-2zM387 326h2v1h-2zM385 327h4v1h-4zM418 326h2v1h-2zM421 326h2v1h-2zM419 327h4v1h-4zM361 330h2v1h-2zM364 330h2v1h-2zM362 331h4v1h-4zM398 330h2v1h-2zM401 330h2v1h-2zM399 331h4v1h-4zM430 330h2v1h-2zM433 330h2v1h-2zM431 331h4v1h-4zM340 327h4v3h-4zM513 263h2v2h-2zM525 263h2v2h-2zM547 263h2v2h-2zM559 263h2v2h-2zM581 263h2v2h-2zM593 263h2v2h-2zM513 282h2v1h-2zM523 282h2v1h-2zM547 282h2v1h-2zM557 282h2v1h-2zM581 282h2v1h-2zM591 282h2v1h-2zM513 300h2v1h-2zM523 300h2v1h-2zM547 300h2v1h-2zM557 300h2v1h-2zM581 300h2v1h-2zM591 300h2v1h-2zM513 318h2v2h-2zM525 318h2v2h-2zM547 318h2v2h-2zM559 318h2v2h-2zM581 318h2v2h-2zM593 318h2v2h-2zM514 256h2v1h-2zM517 256h2v1h-2zM515 257h4v1h-4zM514 270h2v1h-2zM517 270h2v1h-2zM515 271h4v1h-4zM521 273h2v1h-2zM523 273h2v1h-2zM522 274h3v1h-3zM548 256h2v1h-2zM551 256h2v1h-2zM549 257h4v1h-4zM548 270h2v1h-2zM551 270h2v1h-2zM549 271h4v1h-4zM555 273h2v1h-2zM557 273h2v1h-2zM556 274h3v1h-3zM582 256h2v1h-2zM585 256h2v1h-2zM583 257h4v1h-4zM582 270h2v1h-2zM585 270h2v1h-2zM583 271h4v1h-4zM589 273h2v1h-2zM591 273h2v1h-2zM590 274h3v1h-3zM500 265h4v1h-4zM501 266h2v2h-2zM498 268h6v1h-6zM514 288h2v1h-2zM517 288h2v1h-2zM515 289h4v1h-4zM521 291h2v1h-2zM523 291h2v1h-2zM522 292h3v1h-3zM548 288h2v1h-2zM551 288h2v1h-2zM549 289h4v1h-4zM555 291h2v1h-2zM557 291h2v1h-2zM556 292h3v1h-3zM582 288h2v1h-2zM585 288h2v1h-2zM583 289h4v1h-4zM589 291h2v1h-2zM591 291h2v1h-2zM590 292h3v1h-3zM500 283h4v1h-4zM501 284h2v2h-2zM498 286h6v1h-6zM514 306h2v1h-2zM517 306h2v1h-2zM515 307h4v1h-4zM521 309h2v1h-2zM523 309h2v1h-2zM522 310h3v1h-3zM548 306h2v1h-2zM551 306h2v1h-2zM549 307h4v1h-4zM555 309h2v1h-2zM557 309h2v1h-2zM556 310h3v1h-3zM582 306h2v1h-2zM585 306h2v1h-2zM583 307h4v1h-4zM589 309h2v1h-2zM591 309h2v1h-2zM590 310h3v1h-3zM500 301h4v1h-4zM501 302h2v2h-2zM498 304h6v1h-6zM520 323h2v1h-2zM523 323h2v1h-2zM521 324h4v1h-4zM554 323h2v1h-2zM557 323h2v1h-2zM555 324h4v1h-4zM588 323h2v1h-2zM591 323h2v1h-2zM589 324h4v1h-4zM500 320h4v1h-4zM501 321h2v2h-2zM498 323h6v1h-6zM537 249h6v2h-6zM571 249h6v2h-6zM509 326h2v1h-2zM512 326h2v1h-2zM510 327h4v1h-4zM539 326h2v1h-2zM542 326h2v1h-2zM540 327h4v1h-4zM573 326h2v1h-2zM576 326h2v1h-2zM574 327h4v1h-4zM516 330h2v1h-2zM519 330h2v1h-2zM517 331h4v1h-4zM553 330h2v1h-2zM556 330h2v1h-2zM554 331h4v1h-4zM585 330h2v1h-2zM588 330h2v1h-2zM586 331h4v1h-4zM495 327h4v3h-4zM362 353h2v1h-2zM364 353h2v1h-2zM363 354h3v1h-3zM375 355h2v1h-2zM378 355h2v1h-2zM376 356h4v1h-4zM357 363h2v1h-2zM359 363h2v1h-2zM358 364h3v1h-3zM383 353h2v1h-2zM385 353h2v1h-2zM384 354h3v1h-3zM396 355h2v1h-2zM399 355h2v1h-2zM397 356h4v1h-4zM378 363h2v1h-2zM380 363h2v1h-2zM379 364h3v1h-3zM405 353h2v1h-2zM407 353h2v1h-2zM406 354h3v1h-3zM418 355h2v1h-2zM421 355h2v1h-2zM419 356h4v1h-4zM400 363h2v1h-2zM402 363h2v1h-2zM401 364h3v1h-3zM426 353h2v1h-2zM428 353h2v1h-2zM427 354h3v1h-3zM439 355h2v1h-2zM442 355h2v1h-2zM440 356h4v1h-4zM421 363h2v1h-2zM423 363h2v1h-2zM422 364h3v1h-3zM334 373h1v1h-1zM333 374h1v1h-1zM334 374h1v1h-1zM334 375h1v1h-1zM333 376h1v1h-1zM334 376h1v1h-1zM335 376h1v1h-1zM339 373h1v1h-1zM338 374h1v1h-1zM339 374h1v1h-1zM340 374h1v1h-1zM339 375h1v1h-1zM339 376h1v1h-1zM340 376h1v1h-1zM341 375h1v1h-1zM342 375h1v1h-1zM343 375h1v1h-1zM347 373h1v1h-1zM346 374h1v1h-1zM347 374h1v1h-1zM347 375h1v1h-1zM346 376h1v1h-1zM347 376h1v1h-1zM348 376h1v1h-1zM349 373h1v1h-1zM351 373h1v1h-1zM349 374h1v1h-1zM350 374h1v1h-1zM351 374h1v1h-1zM349 375h1v1h-1zM351 375h1v1h-1zM349 376h1v1h-1zM351 376h1v1h-1zM354 373h1v1h-1zM352 374h1v1h-1zM353 374h1v1h-1zM354 374h1v1h-1zM352 375h1v1h-1zM354 375h1v1h-1zM352 376h1v1h-1zM353 376h1v1h-1zM354 376h1v1h-1zM355 373h1v1h-1zM357 373h1v1h-1zM355 374h1v1h-1zM356 374h1v1h-1zM357 374h1v1h-1zM355 375h1v1h-1zM357 375h1v1h-1zM355 376h1v1h-1zM357 376h1v1h-1zM361 373h1v1h-1zM360 374h1v1h-1zM361 374h1v1h-1zM361 375h1v1h-1zM360 376h1v1h-1zM361 376h1v1h-1zM362 376h1v1h-1zM363 373h1v1h-1zM365 373h1v1h-1zM363 374h1v1h-1zM364 374h1v1h-1zM365 374h1v1h-1zM365 375h1v1h-1zM365 376h1v1h-1zM366 373h1v1h-1zM368 373h1v1h-1zM366 374h1v1h-1zM367 374h1v1h-1zM368 374h1v1h-1zM368 375h1v1h-1zM368 376h1v1h-1zM369 373h1v1h-1zM371 373h1v1h-1zM369 374h1v1h-1zM370 374h1v1h-1zM371 374h1v1h-1zM371 375h1v1h-1zM371 376h1v1h-1zM339 362h2v1h-2zM341 362h2v1h-2zM340 363h3v1h-3zM343 366h2v1h-2zM345 366h2v1h-2zM344 367h3v1h-3z"/><path fill="#ff0000" d="M422 164h5v1h-5zM422 168h5v1h-5zM422 164h1v5h-1zM426 164h1v5h-1zM439 164h5v1h-5zM439 168h5v1h-5zM439 164h1v5h-1zM443 164h1v5h-1zM444 165h1v3h-1zM427 165h13v1h-13zM427 167h13v1h-13z"/><path fill="#ff00ff" d="M389 233h1v1h-1zM388 234h1v1h-1zM389 234h1v1h-1zM389 235h1v1h-1zM388 236h1v1h-1zM389 236h1v1h-1zM390 236h1v1h-1zM392 233h1v1h-1zM394 233h1v1h-1zM392 234h1v1h-1zM394 234h1v1h-1zM392 235h1v1h-1zM394 235h1v1h-1zM392 236h1v1h-1zM393 236h1v1h-1zM394 236h1v1h-1zM542 235h1v1h-1zM543 235h1v1h-1zM544 235h1v1h-1zM542 236h1v1h-1zM543 236h1v1h-1zM544 236h1v1h-1zM542 237h1v1h-1zM544 237h1v1h-1zM546 234h1v1h-1zM547 234h1v1h-1zM548 234h1v1h-1zM548 235h1v1h-1zM547 236h1v1h-1zM547 237h1v1h-1zM388 330h1v1h-1zM388 331h1v1h-1zM389 331h1v1h-1zM388 332h1v1h-1zM390 332h1v1h-1zM388 333h1v1h-1zM390 333h1v1h-1zM392 330h1v1h-1zM393 330h1v1h-1zM394 330h1v1h-1zM393 331h1v1h-1zM394 331h1v1h-1zM394 332h1v1h-1zM392 333h1v1h-1zM393 333h1v1h-1zM394 333h1v1h-1zM542 331h1v1h-1zM543 331h1v1h-1zM544 331h1v1h-1zM542 332h1v1h-1zM543 332h1v1h-1zM544 332h1v1h-1zM542 333h1v1h-1zM544 333h1v1h-1zM547 330h1v1h-1zM546 331h1v1h-1zM547 331h1v1h-1zM548 331h1v1h-1zM547 332h1v1h-1zM547 333h1v1h-1zM548 333h1v1h-1zM367 347h1v1h-1zM366 348h1v1h-1zM367 348h1v1h-1zM368 348h1v1h-1zM367 349h1v1h-1zM367 350h1v1h-1zM368 350h1v1h-1zM371 347h1v1h-1zM370 348h1v1h-1zM371 348h1v1h-1zM372 348h1v1h-1zM371 349h1v1h-1zM371 350h1v1h-1zM372 350h1v1h-1zM374 347h1v1h-1zM375 347h1v1h-1zM376 347h1v1h-1zM376 348h1v1h-1zM375 349h1v1h-1zM375 350h1v1h-1zM387 347h1v1h-1zM387 348h1v1h-1zM388 348h1v1h-1zM387 349h1v1h-1zM389 349h1v1h-1zM387 350h1v1h-1zM389 350h1v1h-1zM391 347h1v1h-1zM392 347h1v1h-1zM393 348h1v1h-1zM392 349h1v1h-1zM391 350h1v1h-1zM392 350h1v1h-1zM393 350h1v1h-1zM409 348h1v1h-1zM410 348h1v1h-1zM411 348h1v1h-1zM409 349h1v1h-1zM410 349h1v1h-1zM411 349h1v1h-1zM409 350h1v1h-1zM411 350h1v1h-1zM413 347h1v1h-1zM414 347h1v1h-1zM415 347h1v1h-1zM414 348h1v1h-1zM415 348h1v1h-1zM415 349h1v1h-1zM413 350h1v1h-1zM414 350h1v1h-1zM415 350h1v1h-1zM431 347h1v1h-1zM430 348h1v1h-1zM431 348h1v1h-1zM432 348h1v1h-1zM431 349h1v1h-1zM431 350h1v1h-1zM432 350h1v1h-1zM434 347h1v1h-1zM435 347h1v1h-1zM436 348h1v1h-1zM435 349h1v1h-1zM434 350h1v1h-1zM435 350h1v1h-1zM436 350h1v1h-1z"/></svg>
<div class="a" style="left:21px;top:451px;width:77px;height:18px;background:#e1e1e1;border:1px solid #adadad"></div>
<div class="t ss" style="left:21px;top:454px;width:77px;text-align:center"><span class="c">最不利</span></div>
<div class="a" style="left:103px;top:451px;width:73px;height:18px;background:#e1e1e1;border:1px solid #adadad"></div>
<div class="t ss" style="left:103px;top:454px;width:73px;text-align:center"><span class="c">最不平衡</span></div>
<div class="a" style="left:21px;top:481px;width:155px;height:18px;background:#e1e1e1;border:1px solid #adadad"></div>
<div class="t ss" style="left:21px;top:484px;width:155px;text-align:center"><span class="c">复制楼层</span><span class="m"><i>4</i></span></div>
<div class="t ss" style="left:4px;top:510px"><span class="c">提示信息</span><span class="m"><i>:</i></span><span class="c">立管</span><span class="m"><i>[</i><i>3</i><i>]</i></span><span class="c">实际压降</span><span class="m"><i>8</i><i>3</i><i>2</i><i>.</i><i>4</i><i>4</i></span></div>
<div class="t ss" style="left:4px;top:534px"><span class="m"><i>9</i><i>P</i><i>a</i></span><span class="c">，不平衡率</span><span class="m"><i>0</i><i>.</i><i>0</i><i>%</i></span></div>
<div class="a" style="left:204px;top:440px;width:443px;height:116px;overflow:hidden">
<div class="a" style="left:0px;top:0px;width:443px;height:116px;background:#fff"></div>
<div class="a" style="left:0px;top:0px;width:1px;height:116px;background:#696969"></div>
<div class="a" style="left:0px;top:0px;width:443px;height:1px;background:#696969"></div>
<div class="a" style="left:1px;top:1px;width:16px;height:16px;background:#f0f0f0"></div>
<div class="a" style="left:1px;top:1px;width:15px;height:1px;background:#fff"></div>
<div class="a" style="left:1px;top:1px;width:1px;height:15px;background:#fff"></div>
<div class="a" style="left:15px;top:2px;width:1px;height:14px;background:#a0a0a0"></div>
<div class="a" style="left:2px;top:15px;width:14px;height:1px;background:#a0a0a0"></div>
<div class="a" style="left:16px;top:1px;width:1px;height:16px;background:#696969"></div>
<div class="a" style="left:1px;top:16px;width:16px;height:1px;background:#696969"></div>
<div class="a" style="left:17px;top:1px;width:30px;height:16px;background:#f0f0f0"></div>
<div class="a" style="left:17px;top:1px;width:29px;height:1px;background:#fff"></div>
<div class="a" style="left:17px;top:1px;width:1px;height:15px;background:#fff"></div>
<div class="a" style="left:45px;top:2px;width:1px;height:14px;background:#a0a0a0"></div>
<div class="a" style="left:18px;top:15px;width:28px;height:1px;background:#a0a0a0"></div>
<div class="a" style="left:46px;top:1px;width:1px;height:16px;background:#696969"></div>
<div class="a" style="left:17px;top:16px;width:30px;height:1px;background:#696969"></div>
<div class="a" style="left:47px;top:1px;width:70px;height:16px;background:#f0f0f0"></div>
<div class="a" style="left:47px;top:1px;width:69px;height:1px;background:#fff"></div>
<div class="a" style="left:47px;top:1px;width:1px;height:15px;background:#fff"></div>
<div class="a" style="left:115px;top:2px;width:1px;height:14px;background:#a0a0a0"></div>
<div class="a" style="left:48px;top:15px;width:68px;height:1px;background:#a0a0a0"></div>
<div class="a" style="left:116px;top:1px;width:1px;height:16px;background:#696969"></div>
<div class="a" style="left:47px;top:16px;width:70px;height:1px;background:#696969"></div>
<div class="a" style="left:117px;top:1px;width:60px;height:16px;background:#f0f0f0"></div>
<div class="a" style="left:117px;top:1px;width:59px;height:1px;background:#fff"></div>
<div class="a" style="left:117px;top:1px;width:1px;height:15px;background:#fff"></div>
<div class="a" style="left:175px;top:2px;width:1px;height:14px;background:#a0a0a0"></div>
<div class="a" style="left:118px;top:15px;width:58px;height:1px;background:#a0a0a0"></div>
<div class="a" style="left:176px;top:1px;width:1px;height:16px;background:#696969"></div>
<div class="a" style="left:117px;top:16px;width:60px;height:1px;background:#696969"></div>
<div class="a" style="left:177px;top:1px;width:45px;height:16px;background:#f0f0f0"></div>
<div class="a" style="left:177px;top:1px;width:44px;height:1px;background:#fff"></div>
<div class="a" style="left:177px;top:1px;width:1px;height:15px;background:#fff"></div>
<div class="a" style="left:220px;top:2px;width:1px;height:14px;background:#a0a0a0"></div>
<div class="a" style="left:178px;top:15px;width:43px;height:1px;background:#a0a0a0"></div>
<div class="a" style="left:221px;top:1px;width:1px;height:16px;background:#696969"></div>
<div class="a" style="left:177px;top:16px;width:45px;height:1px;background:#696969"></div>
<div class="a" style="left:222px;top:1px;width:40px;height:16px;background:#f0f0f0"></div>
<div class="a" style="left:222px;top:1px;width:39px;height:1px;background:#fff"></div>
<div class="a" style="left:222px;top:1px;width:1px;height:15px;background:#fff"></div>
<div class="a" style="left:260px;top:2px;width:1px;height:14px;background:#a0a0a0"></div>
<div class="a" style="left:223px;top:15px;width:38px;height:1px;background:#a0a0a0"></div>
<div class="a" style="left:261px;top:1px;width:1px;height:16px;background:#696969"></div>
<div class="a" style="left:222px;top:16px;width:40px;height:1px;background:#696969"></div>
<div class="a" style="left:262px;top:1px;width:60px;height:16px;background:#f0f0f0"></div>
<div class="a" style="left:262px;top:1px;width:59px;height:1px;background:#fff"></div>
<div class="a" style="left:262px;top:1px;width:1px;height:15px;background:#fff"></div>
<div class="a" style="left:320px;top:2px;width:1px;height:14px;background:#a0a0a0"></div>
<div class="a" style="left:263px;top:15px;width:58px;height:1px;background:#a0a0a0"></div>
<div class="a" style="left:321px;top:1px;width:1px;height:16px;background:#696969"></div>
<div class="a" style="left:262px;top:16px;width:60px;height:1px;background:#696969"></div>
<div class="a" style="left:322px;top:1px;width:55px;height:16px;background:#f0f0f0"></div>
<div class="a" style="left:322px;top:1px;width:54px;height:1px;background:#fff"></div>
<div class="a" style="left:322px;top:1px;width:1px;height:15px;background:#fff"></div>
<div class="a" style="left:375px;top:2px;width:1px;height:14px;background:#a0a0a0"></div>
<div class="a" style="left:323px;top:15px;width:53px;height:1px;background:#a0a0a0"></div>
<div class="a" style="left:376px;top:1px;width:1px;height:16px;background:#696969"></div>
<div class="a" style="left:322px;top:16px;width:55px;height:1px;background:#696969"></div>
<div class="a" style="left:377px;top:1px;width:50px;height:16px;background:#f0f0f0"></div>
<div class="a" style="left:377px;top:1px;width:49px;height:1px;background:#fff"></div>
<div class="a" style="left:377px;top:1px;width:1px;height:15px;background:#fff"></div>
<div class="a" style="left:425px;top:2px;width:1px;height:14px;background:#a0a0a0"></div>
<div class="a" style="left:378px;top:15px;width:48px;height:1px;background:#a0a0a0"></div>
<div class="a" style="left:426px;top:1px;width:1px;height:16px;background:#696969"></div>
<div class="a" style="left:377px;top:16px;width:50px;height:1px;background:#696969"></div>
<div class="a" style="left:427px;top:1px;width:50px;height:16px;background:#f0f0f0"></div>
<div class="a" style="left:427px;top:1px;width:49px;height:1px;background:#fff"></div>
<div class="a" style="left:427px;top:1px;width:1px;height:15px;background:#fff"></div>
<div class="a" style="left:475px;top:2px;width:1px;height:14px;background:#a0a0a0"></div>
<div class="a" style="left:428px;top:15px;width:48px;height:1px;background:#a0a0a0"></div>
<div class="a" style="left:476px;top:1px;width:1px;height:16px;background:#696969"></div>
<div class="a" style="left:427px;top:16px;width:50px;height:1px;background:#696969"></div>
<div class="t ss" style="left:19px;top:4px;"><span class="c">编号</span></div>
<div class="t ss" style="left:49px;top:4px;"><span class="c">散热器类型</span></div>
<div class="t ss" style="left:119px;top:4px;"><span class="c">负荷</span><span class="m"><i>W</i></span></div>
<div class="t ss" style="left:179px;top:4px;"><span class="c">室温℃</span></div>
<div class="t ss" style="left:224px;top:4px;"><span class="c">片</span><span class="m"><i>/</i><i>m</i></span></div>
<div class="t ss" style="left:264px;top:4px;"><span class="c">流量</span><span class="m"><i>k</i><i>g</i><i>/</i><i>h</i></span></div>
<div class="t ss" style="left:324px;top:4px;"><span class="c">管材</span></div>
<div class="t ss" style="left:379px;top:4px;"><span class="c">管长</span><span class="m"><i>m</i></span></div>
<div class="t ss" style="left:429px;top:4px;"><span class="c">管径</span></div>
<div class="a" style="left:1px;top:17px;width:16px;height:16px;background:#f0f0f0"></div>
<div class="a" style="left:1px;top:17px;width:15px;height:1px;background:#fff"></div>
<div class="a" style="left:1px;top:17px;width:1px;height:15px;background:#fff"></div>
<div class="a" style="left:15px;top:18px;width:1px;height:14px;background:#a0a0a0"></div>
<div class="a" style="left:2px;top:31px;width:14px;height:1px;background:#a0a0a0"></div>
<div class="a" style="left:16px;top:17px;width:1px;height:16px;background:#696969"></div>
<div class="a" style="left:1px;top:32px;width:16px;height:1px;background:#696969"></div>
<div class="a" style="left:17px;top:17px;width:30px;height:16px;background:#fff"></div>
<div class="a" style="left:46px;top:17px;width:1px;height:16px;background:#a0a0a0"></div>
<div class="a" style="left:17px;top:32px;width:30px;height:1px;background:#a0a0a0"></div>
<div class="t ss" style="left:19px;top:19px;"><span class="m"><i>R</i><i>1</i></span></div>
<div class="a" style="left:47px;top:17px;width:70px;height:16px;background:#eeeec8"></div>
<div class="a" style="left:116px;top:17px;width:1px;height:16px;background:#a0a0a0"></div>
<div class="a" style="left:47px;top:32px;width:70px;height:1px;background:#a0a0a0"></div>
<div class="t ss" style="left:49px;top:19px;"><span class="c">椭柱</span><span class="m"><i>1</i><i>3</i><i>2</i></span><span class="c">型</span></div>
<div class="a" style="left:117px;top:17px;width:60px;height:16px;background:#eeeec8"></div>
<div class="a" style="left:176px;top:17px;width:1px;height:16px;background:#a0a0a0"></div>
<div class="a" style="left:117px;top:32px;width:60px;height:1px;background:#a0a0a0"></div>
<div class="t ss" style="left:119px;top:19px;"><span class="m"><i>1</i><i>2</i><i>0</i><i>0</i><i>.</i><i>0</i><i>0</i></span></div>
<div class="a" style="left:177px;top:17px;width:45px;height:16px;background:#eeeec8"></div>
<div class="a" style="left:221px;top:17px;width:1px;height:16px;background:#a0a0a0"></div>
<div class="a" style="left:177px;top:32px;width:45px;height:1px;background:#a0a0a0"></div>
<div class="t ss" style="left:179px;top:19px;"><span class="m"><i>1</i><i>8</i><i>.</i><i>0</i><i>0</i></span></div>
<div class="a" style="left:222px;top:17px;width:40px;height:16px;background:#fff"></div>
<div class="a" style="left:261px;top:17px;width:1px;height:16px;background:#a0a0a0"></div>
<div class="a" style="left:222px;top:32px;width:40px;height:1px;background:#a0a0a0"></div>
<div class="t ss" style="left:224px;top:19px;"><span class="m"><i>1</i><i>0</i></span><span class="c">片</span></div>
<div class="a" style="left:262px;top:17px;width:60px;height:16px;background:#fff"></div>
<div class="a" style="left:321px;top:17px;width:1px;height:16px;background:#a0a0a0"></div>
<div class="a" style="left:262px;top:32px;width:60px;height:1px;background:#a0a0a0"></div>
<div class="t ss" style="left:264px;top:19px;"><span class="m"><i>4</i><i>1</i><i>.</i><i>2</i><i>8</i></span></div>
<div class="a" style="left:322px;top:17px;width:55px;height:16px;background:#eeeec8"></div>
<div class="a" style="left:376px;top:17px;width:1px;height:16px;background:#a0a0a0"></div>
<div class="a" style="left:322px;top:32px;width:55px;height:1px;background:#a0a0a0"></div>
<div class="t ss" style="left:324px;top:19px;"><span class="c">镀锌钢管</span></div>
<div class="a" style="left:377px;top:17px;width:50px;height:16px;background:#eeeec8"></div>
<div class="a" style="left:426px;top:17px;width:1px;height:16px;background:#a0a0a0"></div>
<div class="a" style="left:377px;top:32px;width:50px;height:1px;background:#a0a0a0"></div>
<div class="t ss" style="left:379px;top:19px;"><span class="m"><i>3</i><i>.</i><i>0</i><i>0</i></span></div>
<div class="a" style="left:427px;top:17px;width:50px;height:16px;background:#eeeec8"></div>
<div class="a" style="left:476px;top:17px;width:1px;height:16px;background:#a0a0a0"></div>
<div class="a" style="left:427px;top:32px;width:50px;height:1px;background:#a0a0a0"></div>
<div class="t ss" style="left:429px;top:19px;"><span class="m"><i>1</i><i>5</i></span></div>
<div class="a" style="left:1px;top:33px;width:16px;height:16px;background:#f0f0f0"></div>
<div class="a" style="left:1px;top:33px;width:15px;height:1px;background:#fff"></div>
<div class="a" style="left:1px;top:33px;width:1px;height:15px;background:#fff"></div>
<div class="a" style="left:15px;top:34px;width:1px;height:14px;background:#a0a0a0"></div>
<div class="a" style="left:2px;top:47px;width:14px;height:1px;background:#a0a0a0"></div>
<div class="a" style="left:16px;top:33px;width:1px;height:16px;background:#696969"></div>
<div class="a" style="left:1px;top:48px;width:16px;height:1px;background:#696969"></div>
<div class="a" style="left:17px;top:33px;width:30px;height:16px;background:#fff"></div>
<div class="a" style="left:46px;top:33px;width:1px;height:16px;background:#a0a0a0"></div>
<div class="a" style="left:17px;top:48px;width:30px;height:1px;background:#a0a0a0"></div>
<div class="t ss" style="left:19px;top:35px;"><span class="m"><i>R</i><i>2</i></span></div>
<div class="a" style="left:47px;top:33px;width:70px;height:16px;background:#eeeec8"></div>
<div class="a" style="left:116px;top:33px;width:1px;height:16px;background:#a0a0a0"></div>
<div class="a" style="left:47px;top:48px;width:70px;height:1px;background:#a0a0a0"></div>
<div class="t ss" style="left:49px;top:35px;"><span class="c">椭柱</span><span class="m"><i>1</i><i>3</i><i>2</i></span><span class="c">型</span></div>
<div class="a" style="left:117px;top:33px;width:60px;height:16px;background:#eeeec8"></div>
<div class="a" style="left:176px;top:33px;width:1px;height:16px;background:#a0a0a0"></div>
<div class="a" style="left:117px;top:48px;width:60px;height:1px;background:#a0a0a0"></div>
<div class="t ss" style="left:119px;top:35px;"><span class="m"><i>1</i><i>2</i><i>0</i><i>0</i><i>.</i><i>0</i><i>0</i></span></div>
<div class="a" style="left:177px;top:33px;width:45px;height:16px;background:#eeeec8"></div>
<div class="a" style="left:221px;top:33px;width:1px;height:16px;background:#a0a0a0"></div>
<div class="a" style="left:177px;top:48px;width:45px;height:1px;background:#a0a0a0"></div>
<div class="t ss" style="left:179px;top:35px;"><span class="m"><i>1</i><i>8</i><i>.</i><i>0</i><i>0</i></span></div>
<div class="a" style="left:222px;top:33px;width:40px;height:16px;background:#fff"></div>
<div class="a" style="left:261px;top:33px;width:1px;height:16px;background:#a0a0a0"></div>
<div class="a" style="left:222px;top:48px;width:40px;height:1px;background:#a0a0a0"></div>
<div class="t ss" style="left:224px;top:35px;"><span class="m"><i>1</i><i>0</i></span><span class="c">片</span></div>
<div class="a" style="left:262px;top:33px;width:60px;height:16px;background:#fff"></div>
<div class="a" style="left:321px;top:33px;width:1px;height:16px;background:#a0a0a0"></div>
<div class="a" style="left:262px;top:48px;width:60px;height:1px;background:#a0a0a0"></div>
<div class="t ss" style="left:264px;top:35px;"><span class="m"><i>4</i><i>1</i><i>.</i><i>2</i><i>8</i></span></div>
<div class="a" style="left:322px;top:33px;width:55px;height:16px;background:#eeeec8"></div>
<div class="a" style="left:376px;top:33px;width:1px;height:16px;background:#a0a0a0"></div>
<div class="a" style="left:322px;top:48px;width:55px;height:1px;background:#a0a0a0"></div>
<div class="t ss" style="left:324px;top:35px;"><span class="c">镀锌钢管</span></div>
<div class="a" style="left:377px;top:33px;width:50px;height:16px;background:#eeeec8"></div>
<div class="a" style="left:426px;top:33px;width:1px;height:16px;background:#a0a0a0"></div>
<div class="a" style="left:377px;top:48px;width:50px;height:1px;background:#a0a0a0"></div>
<div class="t ss" style="left:379px;top:35px;"><span class="m"><i>3</i><i>.</i><i>0</i><i>0</i></span></div>
<div class="a" style="left:427px;top:33px;width:50px;height:16px;background:#eeeec8"></div>
<div class="a" style="left:476px;top:33px;width:1px;height:16px;background:#a0a0a0"></div>
<div class="a" style="left:427px;top:48px;width:50px;height:1px;background:#a0a0a0"></div>
<div class="t ss" style="left:429px;top:35px;"><span class="m"><i>1</i><i>5</i></span></div>
<div class="a" style="left:1px;top:49px;width:16px;height:51px;background:#f0f0f0"></div>
<div class="a" style="left:1px;top:100px;width:442px;height:16px;background:#f0f0f0"></div>
<div class="a" style="left:18px;top:100px;width:17px;height:15px;background:#cdcdcd"></div>
<svg class="a" style="left:3px;top:103px" width="10" height="10" viewBox="207 543 10 10"><path d="M215 544.5L211.5 548L215 551.5" fill="none" stroke="#606060" stroke-width="2"/></svg>
</div></body></html>
